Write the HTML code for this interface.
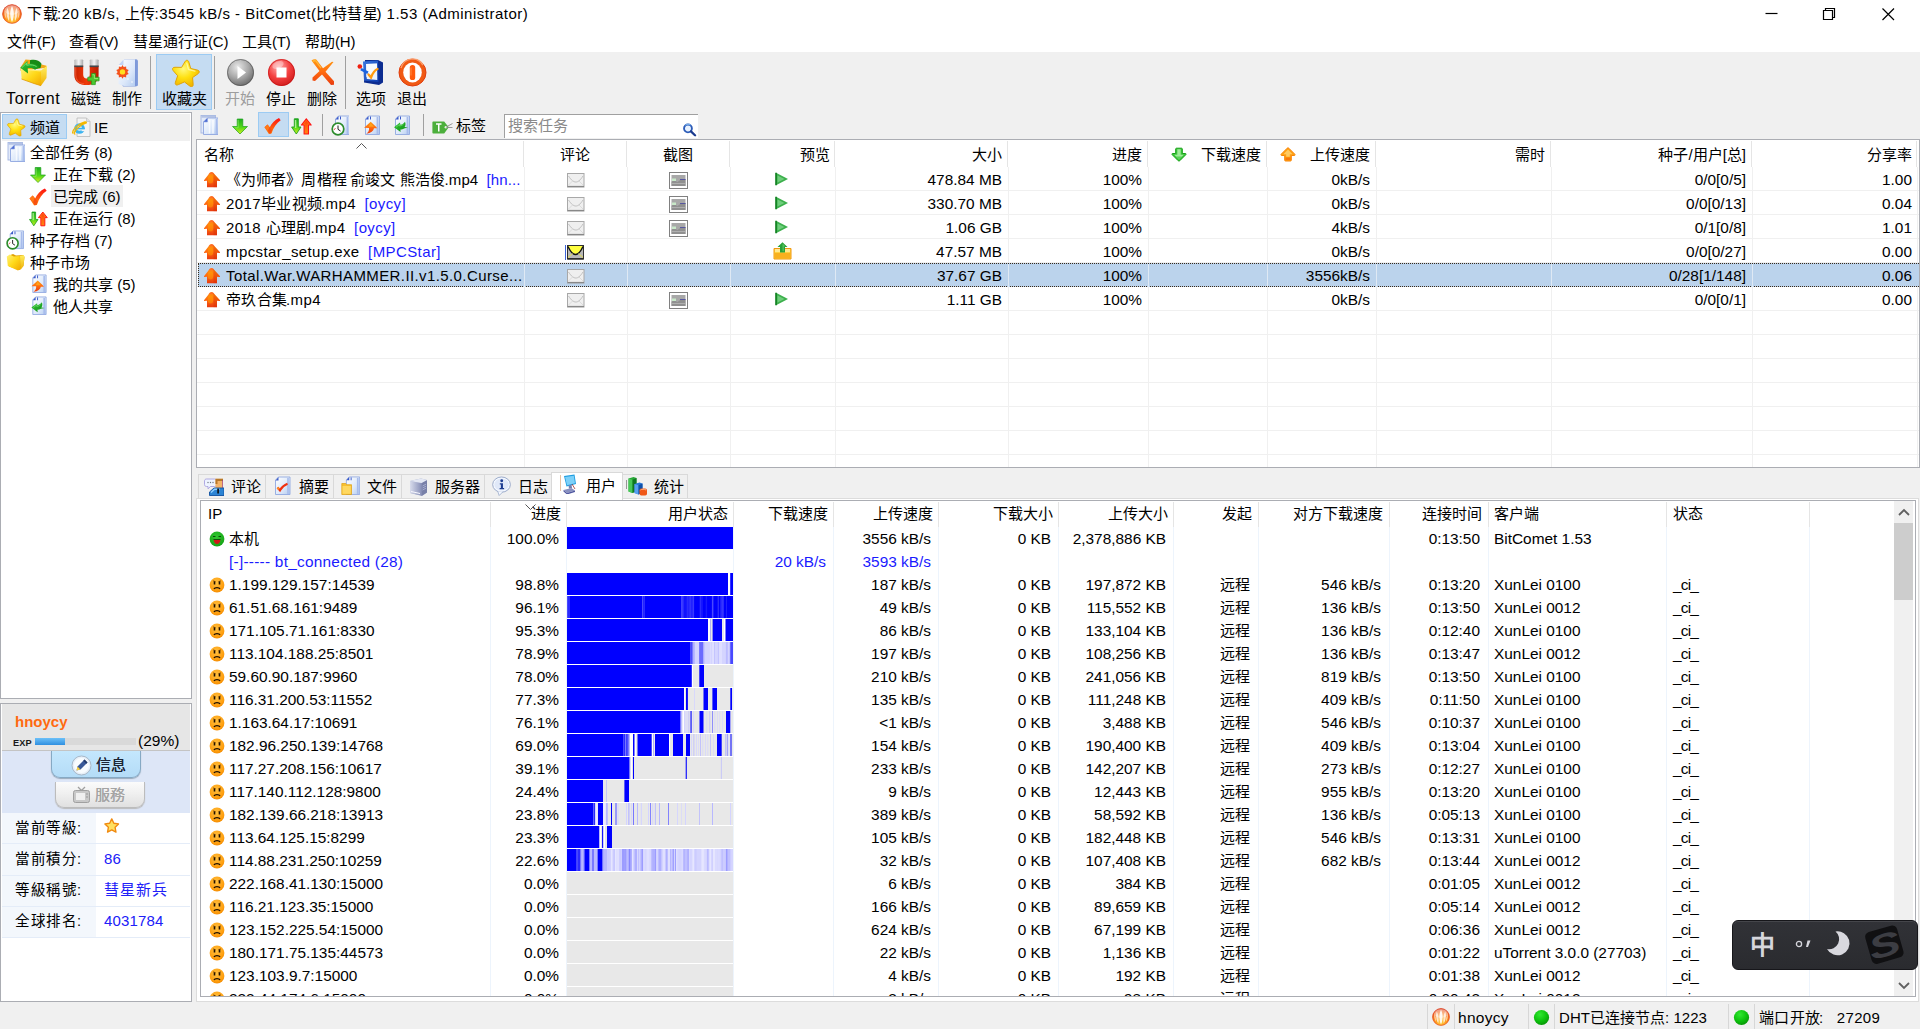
<!DOCTYPE html>
<html lang="zh-CN"><head><meta charset="utf-8"><title>BitComet</title>
<style>
*{box-sizing:border-box;margin:0;padding:0}
html,body{width:1920px;height:1029px;overflow:hidden}
body{position:relative;background:#f0f0f0;font-family:"Liberation Sans",sans-serif;font-size:15px;color:#000;line-height:18px}
#top{position:absolute;left:0;top:0;width:1920px;height:52px;background:#fff}
.i{position:absolute;overflow:visible}
.t{position:absolute;white-space:nowrap;line-height:18px;height:18px;margin-top:1px}
.c{text-align:center}
.r{text-align:right}
.n{font-size:15.4px}
.m{font-size:15px;letter-spacing:.4px}
.m b{font-weight:normal;color:#1a1aff;margin-left:4px}
.bl{color:#1a1aff}
.dis{color:#9d9d9d}
.tbhl{position:absolute;background:#c5dcf2;border:1px solid #9ccbf3}
.vsep{position:absolute;width:1px;background:#a0a0a0}
#lp{position:absolute;left:0;top:112px;width:192px;height:587px;background:#fff;border:1px solid #abadb3}
#lp .tabstrip{position:absolute;left:1px;top:1px;width:188px;height:27px;background:#f0f0f0}
#search{position:absolute;left:504px;top:114px;width:194px;height:24px;background:#fff;border-top:1px solid #a0a0a0;border-left:1px solid #a0a0a0}
#search>span{position:absolute;left:3px;top:2px;color:#8a8a8a;line-height:18px}
#tl{position:absolute;left:196px;top:139px;width:1724px;height:329px;background:#fff;border:1px solid #abadb3;overflow:hidden}
#tl .hl{position:absolute;top:1px;width:1px;height:26px;background:#e5e5e5}
#tl .cl{position:absolute;top:27px;width:1px;height:300px;background:#f0f0f0}
#tl .cl2{position:absolute;width:1px;height:23px;background:#dfe9f4}
#tl .rl{position:absolute;left:0;width:1722px;height:1px;background:#f0f0f0}
#tl .sel{position:absolute;left:1px;width:1721px;height:24px;background:#bbd3ec;border:1px dotted #3a2a18;border-right:none}
#bp{position:absolute;left:196px;top:498px;width:1723px;height:504px;border:1px solid #dcdcdc;background:#fff}
.tab{position:absolute;border-left:1px solid #d9d9d9;border-top:1px solid #d9d9d9;background:#f0f0f0}
.tsel{background:#fff;border-right:1px solid #d9d9d9}
#pl{position:absolute;left:200px;top:500px;width:1716px;height:497px;background:#fff;border:1px solid #abadb3;overflow:hidden}
#pl .pcl{position:absolute;top:26px;width:1px;height:470px;background:#edf4fc}
#pl .phl{position:absolute;top:1px;width:1px;height:25px;background:#e5e5e5}
#pl .bar{position:absolute;left:366px;width:166px;height:22px}
#sb{position:absolute;left:1693px;top:0;width:19px;height:495px;background:#f0f0f0}
#sb .thumb{position:absolute;left:0;top:22px;width:19px;height:77px;background:#cdcdcd}
.ssep{position:absolute;top:1004px;width:1px;height:25px;background:#d7d7d7}
#up{position:absolute;left:0;top:703px;width:192px;height:299px;background:#fff;border:1px solid #abadb3;overflow:hidden}
#up .hd{position:absolute;left:1px;top:0;width:188px;height:47px;background:#e6e6e6;border-bottom:1px solid #c4c4c4}
#up .xp{position:absolute;left:34px;top:34px;width:101px;height:7px;background:#d9d9d9}
#up .xp div{width:30px;height:7px;background:linear-gradient(#6cc0f8,#2f8fe0)}
#up .mid{position:absolute;left:1px;top:47px;width:188px;height:62px;background:#dde6f7}
#up .btn{position:absolute;border-radius:0 0 9px 9px}
#up .b1{left:50px;top:47px;width:90px;height:27px;background:linear-gradient(#c4e7fd,#b4dcf7);border:1px solid #86a9c4;border-top:none;box-shadow:0 1px 1px #9ab}
#up .b2{left:54px;top:78px;width:90px;height:26px;background:linear-gradient(#fbfbfb,#f0f0f0 45%,#e0e0e0);border:1px solid #bcbcbc;border-top:none;box-shadow:0 1px 1px #bbb}
#up .rows{position:absolute;left:1px;top:109px;width:188px}
#up .rw{position:relative;height:31.3px;border-bottom:1px solid #e4ecf8;background:linear-gradient(90deg,#f3f7fc 94px,#fff 94px)}
#up .rw>span{position:absolute;left:13px;top:5.5px;font-size:14.5px;letter-spacing:1.5px;white-space:nowrap}
#up .rw>i{position:absolute;left:102px;top:5.5px;font-style:normal;color:#2020f8;font-size:15px;letter-spacing:.15px;white-space:nowrap}
#ime{position:absolute;left:1732px;top:920px;width:186px;height:50px;border-radius:6px;background:linear-gradient(#313237,#2a2b2f);border:1.500px solid #16161a;box-shadow:inset 0 1px 0 #44454a}
#up .t{margin-top:0}
.z{display:inline-block;white-space:nowrap;text-align:justify;text-align-last:justify;text-justify:inter-character}
#up .rw .z{width:auto !important}
#up .rw>i .z{width:auto !important;letter-spacing:.9px}

</style></head>
<body>
<svg width="0" height="0" style="position:absolute"><defs>

<radialGradient id="gBc" cx=".5" cy=".8" r=".75"><stop offset="0" stop-color="#ffd040"/><stop offset=".45" stop-color="#ff9418"/><stop offset=".85" stop-color="#f0601a"/><stop offset="1" stop-color="#d8402a"/></radialGradient>
<linearGradient id="gFold" x1="0" y1="0" x2="1" y2="1"><stop offset="0" stop-color="#fff27a"/><stop offset=".5" stop-color="#ffd91a"/><stop offset="1" stop-color="#f2a800"/></linearGradient>
<linearGradient id="gFold2" x1="0" y1="0" x2="0" y2="1"><stop offset="0" stop-color="#ffee60"/><stop offset="1" stop-color="#f0b000"/></linearGradient>
<linearGradient id="gGrn" x1="0" y1="0" x2="0" y2="1"><stop offset="0" stop-color="#1fae1f"/><stop offset=".55" stop-color="#52d818"/><stop offset="1" stop-color="#d8ee20"/></linearGradient>
<linearGradient id="gGrn2" x1="0" y1="0" x2="1" y2="1"><stop offset="0" stop-color="#38c838"/><stop offset="1" stop-color="#0c8a14"/></linearGradient>
<linearGradient id="gRedUp" x1="0" y1="0" x2="0" y2="1"><stop offset="0" stop-color="#ff1010"/><stop offset="1" stop-color="#ff8a10"/></linearGradient>
<linearGradient id="gOr" x1="0" y1="0" x2="0" y2="1"><stop offset="0" stop-color="#ff9a10"/><stop offset=".5" stop-color="#ff6a10"/><stop offset="1" stop-color="#e83c10"/></linearGradient>
<linearGradient id="gMag" x1="0" y1="0" x2="1" y2="0"><stop offset="0" stop-color="#c82000"/><stop offset=".5" stop-color="#f03a08"/><stop offset="1" stop-color="#b81c00"/></linearGradient>
<linearGradient id="gTip" x1="0" y1="0" x2="1" y2="0"><stop offset="0" stop-color="#b8b8b8"/><stop offset=".5" stop-color="#f4f4f4"/><stop offset="1" stop-color="#a8a8a8"/></linearGradient>
<linearGradient id="gDoc" x1="0" y1="0" x2="1" y2="1"><stop offset="0" stop-color="#ffffff"/><stop offset=".6" stop-color="#dce8fa"/><stop offset="1" stop-color="#b4ccf0"/></linearGradient>
<radialGradient id="gStar" cx=".4" cy=".35" r=".7"><stop offset="0" stop-color="#fffa80"/><stop offset=".5" stop-color="#ffe010"/><stop offset="1" stop-color="#f0b400"/></radialGradient>
<radialGradient id="gGrey" cx=".4" cy=".3" r=".8"><stop offset="0" stop-color="#e8e8e8"/><stop offset=".5" stop-color="#a8a8a8"/><stop offset="1" stop-color="#5c5c5c"/></radialGradient>
<radialGradient id="gRed" cx=".4" cy=".3" r=".8"><stop offset="0" stop-color="#ffb0b0"/><stop offset=".5" stop-color="#f44040"/><stop offset="1" stop-color="#c81414"/></radialGradient>
<radialGradient id="gBall" cx=".4" cy=".3" r=".75"><stop offset="0" stop-color="#30e830"/><stop offset=".6" stop-color="#0cc00c"/><stop offset="1" stop-color="#089008"/></radialGradient>
<radialGradient id="gFaceO" cx=".45" cy=".35" r=".7"><stop offset="0" stop-color="#ffc040"/><stop offset=".7" stop-color="#ffa010"/><stop offset="1" stop-color="#f08800"/></radialGradient>
<radialGradient id="gFaceG" cx=".45" cy=".35" r=".7"><stop offset="0" stop-color="#30c830"/><stop offset="1" stop-color="#12a012"/></radialGradient>
<linearGradient id="gBlueDoc" x1="0" y1="0" x2="1" y2="1"><stop offset="0" stop-color="#3c78e0"/><stop offset="1" stop-color="#0c3cb0"/></linearGradient>
<linearGradient id="gSrv" x1="0" y1="0" x2="1" y2="0"><stop offset="0" stop-color="#d8dcec"/><stop offset="1" stop-color="#8890b8"/></linearGradient>
<symbol id="s-bc" viewBox="0 0 20 20"><circle cx="10" cy="10" r="9.600" fill="url(#gBc)"/>
<ellipse cx="10" cy="6" rx="7.500" ry="5" fill="#fff" opacity=".45"/>
<path d="M10 18C7.300 13 7.800 6.500 10 2C12.200 6.500 12.700 13 10 18z" fill="#fff" opacity=".9"/>
<path d="M7 17C4 12.500 4 7.500 5.300 3.800C7.300 7.500 8 12.500 7 17z" fill="#fff" opacity=".75"/>
<path d="M13 17C16 12.500 16 7.500 14.700 3.800C12.700 7.500 12 12.500 13 17z" fill="#fff" opacity=".75"/>
<path d="M4.300 15C2.200 12 1.900 9 2.700 6C4.200 9 4.800 12 4.300 15z" fill="#fff" opacity=".55"/>
<path d="M15.700 15C17.800 12 18.100 9 17.300 6C15.800 9 15.200 12 15.700 15z" fill="#fff" opacity=".55"/>
<circle cx="10" cy="10" r="9.300" fill="none" stroke="#e4502c" stroke-width=".9" opacity=".85"/></symbol>
<symbol id="s-torrent" viewBox="0 0 29 29"><path d="M1.500 9.500l5-8 6 .5 1.500 2.200 13.500 3.500v2l-26 3z" fill="#f0a818"/>
<path d="M22 12.500l5.900-4.700-.4 12.200-5.500 7.700z" fill="url(#gFold2)"/>
<path d="M1.700 10.500l20.300 2v15.200l-7-2.200-12.300-4.500z" fill="url(#gFold)"/>
<path d="M2.500 21l12.500 4.500 7 2.200" stroke="#e09800" stroke-width=".8" fill="none"/>
<path d="M2.200 11l19.500 2" stroke="#fffab0" stroke-width=".8" opacity=".8"/>
<path d="M11 2.300c4.500-1.300 9.500 0 11.500 3.500l-1 4.200-4.500 .8c-1-2.500-3-3.800-6-3.500z" fill="#168a16"/>
<path d="M1.300 9.800l7.200-7v3.500c5-1.200 9.500 0 12 3l-4.500 2.500c-1.800-1.500-4.500-2-7.300-1.500l.3 5.200z" fill="url(#gGrn2)"/>
<path d="M3 9.500l4.700-4.500v2.200c4-.8 7.500-.3 10 1.500" stroke="#90f090" stroke-width="1" fill="none" opacity=".7"/></symbol>
<symbol id="s-magnet" viewBox="0 0 30 30"><path d="M2.500 8h9.500v10c0 2.500 1.500 4 3.500 4s3.500-1.500 3.500-4v-10h9.500v10.500c0 7-5.500 10.500-13 10.500s-13-3.500-13-10.500z" fill="url(#gMag)"/>
<path d="M4 9v9.500c0 5 3.500 8.500 9 9.200" stroke="#ff6a40" stroke-width="1.200" fill="none" opacity=".6"/>
<rect x="2.500" y="1.500" width="9.500" height="7" rx="1" fill="url(#gTip)"/><rect x="19" y="1.500" width="9.500" height="7" rx="1" fill="url(#gTip)"/>
<rect x="2.500" y="8" width="9.500" height="1.800" fill="#44484c"/><rect x="19" y="8" width="9.500" height="1.800" fill="#44484c"/>
<path d="M21 16.500h4v4h4v4h-4v4h-4v-4h-4v-4h4z" fill="#48c830" stroke="#2a9a1c" stroke-width=".8"/>
<path d="M22 18h2v4h4" stroke="#a8f088" stroke-width="1" fill="none" opacity=".8"/></symbol>
<symbol id="s-make" viewBox="0 0 26 30"><path d="M10 1.500h13l1 1v25l-2 1h-13l-1-2z" fill="#86a0dc"/>
<path d="M9.500 1.500l-5 5.500v19l5.500 2h11.500v-26.500z" fill="url(#gDoc)"/>
<path d="M9.500 1.500v5.500h-5z" fill="#c4d4f4"/>
<path d="M21.800 1.500v26.500" stroke="#7894d8" stroke-width="1.400"/>
<path d="M8.500 7l1.200 2.100 2.400-.7 .2 2.500 2.400 1-1.400 2 1.400 2-2.400 1-.2 2.500-2.400-.7-1.200 2.100-1.200-2.100-2.400 .7-.2-2.500-2.400-1 1.400-2-1.400-2 2.400-1 .2-2.500 2.400 .7z" fill="#f4521c"/>
<circle cx="8.500" cy="13.900" r="2.700" fill="#ffe020"/>
<circle cx="14" cy="21" r=".7" fill="#fff"/><circle cx="18" cy="24" r=".8" fill="#fff"/></symbol>
<symbol id="s-star" viewBox="0 0 29 28"><path d="M14.500 1.200c.9 0 1.500.6 2 1.700l2.600 6 6.600.7c1.200.1 2 .6 2.200 1.400.2.800-.2 1.500-1 2.300l-4.900 4.400 1.400 6.500c.2 1.100.1 2-.6 2.500s-1.600.3-2.600-.3l-5.700-3.400-5.700 3.400c-1 .6-1.900.8-2.600.3s-.8-1.400-.6-2.500l1.400-6.500-4.900-4.400c-.8-.8-1.200-1.500-1-2.300.2-.8 1-1.300 2.200-1.400l6.600-.7 2.600-6c.5-1.100 1.100-1.700 2-1.700z" fill="url(#gStar)" stroke="#e0a000" stroke-width=".9" transform="rotate(7 14.500 14.500)"/>
<path d="M14.500 4l2.500 6.200 6.500.8" transform="rotate(7 14.500 14.500)" stroke="#fffcc0" stroke-width="1.400" fill="none" opacity=".7" stroke-linecap="round"/></symbol>
<symbol id="s-start" viewBox="0 0 29 29"><circle cx="14.500" cy="14.500" r="13.500" fill="url(#gGrey)"/><circle cx="14.500" cy="14.500" r="13" fill="none" stroke="#505050" stroke-width="1" opacity=".6"/>
<path d="M11.500 8l8.500 6.500-8.500 6.500z" fill="#fff"/></symbol>
<symbol id="s-stop" viewBox="0 0 29 29"><circle cx="14.500" cy="14.500" r="13.500" fill="url(#gRed)"/><circle cx="14.500" cy="14.500" r="13" fill="none" stroke="#c01010" stroke-width="1" opacity=".6"/>
<ellipse cx="11" cy="7" rx="6" ry="3.500" fill="#fff" opacity=".35" transform="rotate(-25 11 7)"/>
<rect x="9.500" y="9.500" width="10" height="10" fill="#fff"/></symbol>
<symbol id="s-del" viewBox="0 0 26 29"><path d="M1.500 2.500c1.500-1.200 3.500-1.500 5-.8l6.500 8.500 9-6.500 1.500 .3-8 9.700 8.500 9.500v3.500l-3 .3-9-10.500-7 6.500-2.500-.5v-3l7-6.500z" fill="url(#gOr)"/>
<path d="M2.500 3.500c1-.8 2-1 3.500-.5l5 7" stroke="#ffc040" stroke-width="1.300" fill="none" opacity=".8"/></symbol>
<symbol id="s-opt" viewBox="0 0 27 27"><path d="M8 1l13 0 5 2.500v20l-4 2.500-15-2.500z" fill="#0c2c90"/>
<path d="M6 2.500l15-1 .5 21.500-14.500-1.500z" fill="url(#gBlueDoc)"/>
<path d="M9 5l11-.5 .3 16.500-10.500-1z" fill="#eaf2fc"/>
<path d="M9 5l11-.5v8c-4 1-8 3-11 6z" fill="#fff" opacity=".6"/>
<path d="M11.500 15.500l2.500 3c1.500-4 3-7 6.500-8.500" stroke="#ff9a10" stroke-width="2.300" fill="none" stroke-linecap="round"/>
<circle cx="2.800" cy="7.500" r="2.300" fill="#f02010"/>
<path d="M4.500 9l7 3.500-1.200 2.500-7-3.800z" fill="#1c64e0"/></symbol>
<symbol id="s-exit" viewBox="0 0 29 29"><circle cx="14.500" cy="14.500" r="13.500" fill="#f05a14"/><circle cx="14.500" cy="14.500" r="13.500" fill="none" stroke="#e03c0c" stroke-width="1"/>
<path d="M3 10a12 12 0 0 1 22-3" stroke="#ffb080" stroke-width="1.500" fill="none" opacity=".8"/>
<ellipse cx="14.500" cy="14.500" rx="9.300" ry="10" fill="#fff"/>
<rect x="11.800" y="7" width="5.400" height="15" rx="2.600" fill="#ff5a0c"/>
<path d="M13 9.500v8" stroke="#ff9a50" stroke-width="1" opacity=".8"/></symbol>
<symbol id="s-docs" viewBox="0 0 18 20"><rect x="1" y=".5" width="14.500" height="17.500" fill="#e2eaf9" stroke="#a4b6e2" stroke-width=".9"/><rect x="1.400" y=".9" width="13.700" height="1.800" fill="#b4c2e4"/>
<path d="M7.500 3h10.500v16.500h-14.500v-12.500z" fill="url(#gDoc)" stroke="#8ea6e0" stroke-width=".9"/>
<path d="M7.500 3v4h-4z" fill="#4c6cd4"/><path d="M7.500 3v4h-4" fill="none" stroke="#8ea6e0" stroke-width=".6"/>
<path d="M9.500 5v13.500M13 5v13.500" stroke="#fff" stroke-width="1.600" opacity=".75"/><path d="M16.300 4v15" stroke="#a8bcec" stroke-width="1.400"/></symbol>
<symbol id="s-down" viewBox="0 0 18 17"><path d="M6.200 1h5.600v7.500h4.700l-7.500 7.500-7.500-7.500h4.700z" fill="url(#gGrn)" stroke="#1ea01e" stroke-width=".7" stroke-linejoin="round"/>
<path d="M7.200 1.800v8h-3.500" stroke="#a0f470" stroke-width="1" fill="none" opacity=".55"/></symbol>
<symbol id="s-check" viewBox="0 0 17 16"><path d="M.5 9.300l3-2.800 2.300 2.800c1.800-3.800 4.800-7.300 9.200-9.300l1.700 2.200c-4.300 2.800-7.200 7.200-9.200 13.300l-2.800 .3z" fill="url(#gRedUp)"/>
<path d="M.5 9.300l3-2.800 2 2.500-1.500 3.800z" fill="#ff7a18"/><path d="M4 12.800l1.500-3.800 2.500 3-1 3.500-2 .3z" fill="#f85010"/></symbol>
<symbol id="s-updown" viewBox="0 0 21 17"><path d="M3.300 .8h4v8.200h2.700l-4.700 7-4.700-7h2.700z" fill="url(#gGrn)" stroke="#1ea01e" stroke-width=".9" stroke-linejoin="round"/><path d="M4.600 2v8" stroke="#d8ffc0" stroke-width="1.400" opacity=".7"/>
<path d="M15.300 .8l4.900 6.200h-2.700v9h-4.400v-9h-2.700z" fill="#ff7c10" stroke="#ff1414" stroke-width="1.100" stroke-linejoin="round"/><path d="M15.300 2.500l2.500 3.500h-1.300v9h-2.400v-9h-1.300z" fill="url(#gRedUp)" opacity=".55"/></symbol>
<symbol id="s-clockdoc" viewBox="0 0 18 21"><g transform="translate(2 0)"><path d="M5.500 1h11v18.500h-14v-15.500z" fill="url(#gDoc)" stroke="#90a8e0" stroke-width=".9"/><path d="M5.500 1v3.500h-3z" fill="#3858c8"/><path d="M14.500 2v17" stroke="#a8bcec" stroke-width="1.800"/><path d="M7.500 1.500v3" stroke="#3858c8" stroke-width="1"/></g><circle cx="7" cy="14" r="5.800" fill="#fff" stroke="#2c8c2c" stroke-width="1.700"/><path d="M7 10.500v3.800l2.500 1.700" stroke="#202020" stroke-width="1" fill="none"/><path d="M4.500 13l-1.500 2" stroke="#d02020" stroke-width=".7"/></symbol>
<symbol id="s-updoc" viewBox="0 0 17 20"><path d="M5.500 1h11v18.500h-14v-15.500z" fill="url(#gDoc)" stroke="#90a8e0" stroke-width=".9"/><path d="M5.500 1v3.500h-3z" fill="#3858c8"/><path d="M14.500 2v17" stroke="#a8bcec" stroke-width="1.800"/><path d="M7.500 1.500v3" stroke="#3858c8" stroke-width="1"/><path d="M7.700 6.800l5.300 5 1.200 1.500h-3.200c-.5 2.700-3 4.700-7.700 5.500c2.200-1.800 3-3.300 2.700-5.800l-4.900-.2z" fill="url(#gOr)"/><path d="M7.700 8.300l3.300 3.500h-5.500z" fill="#ffb020" opacity=".7"/></symbol>
<symbol id="s-downdoc" viewBox="0 0 17 20"><path d="M5.500 1h11v18.500h-14v-15.500z" fill="url(#gDoc)" stroke="#90a8e0" stroke-width=".9"/><path d="M5.500 1v3.500h-3z" fill="#3858c8"/><path d="M14.500 2v17" stroke="#a8bcec" stroke-width="1.800"/><path d="M7.500 1.500v3" stroke="#3858c8" stroke-width="1"/><path d="M1 12.200l6-4.700 .3 2.300c2.200-.5 3.700-1.500 4.700-3.100c1 2.300 .5 4.300-.5 5.300l3.400 .5-3.900 1c-1 .8-2.200 1.100-3.600 1.100l.2 2.400z" fill="url(#gGrn2)"/><path d="M3 12.200l3.500-2.700 .2 1.500c1.500-.2 2.800-.8 3.800-1.800" stroke="#70e070" stroke-width=".9" fill="none" opacity=".8"/></symbol>
<symbol id="s-tag" viewBox="0 0 21 13"><path d="M1.200 .5h11l4.500 5.800-4.500 6.200h-11c-.5 0-.8-.3-.8-.8v-10.400c0-.5.300-.8.800-.8z" fill="#4caf3c"/>
<path d="M4 3h5.500M6.750 3v7.500" stroke="#fff" stroke-width="1.500" fill="none"/>
<circle cx="13.800" cy="6.300" r="1.200" fill="#e8f4e0"/><path d="M14.500 5.800l6-3.300M14.500 6.500l6 0" stroke="#8c8c8c" stroke-width=".9" fill="none"/></symbol>
<symbol id="s-search" viewBox="0 0 17 17"><circle cx="7" cy="7.500" r="4.600" fill="#e8f2ff" stroke="#2c5cb8" stroke-width="2.200"/><path d="M10.500 11l5 4.800" stroke="#1c3c90" stroke-width="2.600" stroke-linecap="round"/><path d="M4 4a5 5 0 0 1 6-.5" stroke="#7cb4f0" stroke-width="1.200" fill="none"/></symbol>
<symbol id="s-ie" viewBox="0 0 19 20"><path d="M5 1h9.500l3.500 3.500v15h-13z" fill="#f4f4f4" stroke="#b8b8b8" stroke-width=".8"/><path d="M14.500 1v3.500h3.500" fill="#e0e0e0" stroke="#b8b8b8" stroke-width=".6"/>
<circle cx="7.500" cy="11.500" r="5.300" fill="#3cb4f0"/><circle cx="7.500" cy="11.300" r="2.500" fill="#f4f4f4"/><rect x="4.500" y="10.700" width="8.200" height="1.700" fill="#3cb4f0"/><path d="M9.500 12.400h3.500v1.800h-3.500z" fill="#f4f4f4"/>
<path d="M.8 16.500c-1-3 4-9.500 12-11.500 1.500-.3 2 .5 1 1.200-5 1.500-10.500 6-11.500 9.500-.3 1 .2 1.500 1 1.300" stroke="#f4b800" stroke-width="1.300" fill="none"/></symbol>
<symbol id="s-folder" viewBox="0 0 19 18"><path d="M3 2.500l4-1.500 3 1.500 7.500-.5 1 2-1 9-4 4-10.500-3.500z" fill="#e0a000"/>
<path d="M.8 3.500l3-2 4 2 6-.5.7 13-2.500 1.500-10.200-4.500z" fill="url(#gFold)"/>
<path d="M14 3l3.800-1 .7 2.500-1.200 8.500-2.800 4z" fill="url(#gFold2)"/></symbol>
<symbol id="s-dng" viewBox="0 0 16 15"><path d="M5.500 1.200h5c.5 0 .8.300 .8.800v4.500h3c.8 0 1 .6 .5 1.200l-6 6c-.5.500-1.100.500-1.600 0l-6-6c-.5-.6-.3-1.200.500-1.200h3v-4.500c0-.5.300-.8.800-.8z" fill="#3cc83c" stroke="#18a018" stroke-width="1"/><path d="M6.300 2.300h3.400v5.500h3l-4.700 4.700-4.700-4.700h3z" fill="#b8f4b0" opacity=".8"/><path d="M5 9.500l3 3 3-3z" fill="#3cc83c" opacity=".7"/></symbol>
<symbol id="s-upo" viewBox="0 0 16 15"><path d="M7.200 1.200c.5-.5 1.100-.5 1.600 0l6 6c.5.600 .3 1.300-.5 1.300h-3v4.700c0 .5-.3.800-.8.800h-5c-.5 0-.8-.3-.8-.8v-4.700h-3c-.8 0-1-.7-.5-1.300z" fill="#ffa010" stroke="#f88408" stroke-width="1"/><path d="M8 2.500l4.500 4.800h-2.700v2.500h-3.600v-2.500h-2.700z" fill="#ffd070" opacity=".85"/><path d="M5.500 10.500h5v2.500h-5z" fill="#f86c08" opacity=".8"/></symbol>
<symbol id="s-upo2" viewBox="0 0 18 16"><path d="M6.800 .8l1.700-.8 1.700 .8 6.800 7.400v.9l-3-.3v6.400h-10v-6.400l-3 .3v-.9z" fill="url(#gOr)"/><path d="M8.500 0l1.700 .8 6.800 7.400v.9l-3-.3v6.400h-3.500v-12z" fill="#c82000" opacity=".28"/><path d="M6.800 .8l1.700-.8 1.700 .8 1.300 1.500h-6z" fill="#ff6030" opacity=".7"/><ellipse cx="7.500" cy="7.500" rx="2.800" ry="4" fill="#ffa800" opacity=".45"/></symbol>
<symbol id="s-mail" viewBox="0 0 20 15"><rect x="1.500" y=".5" width="16.500" height="13.500" fill="#efefef" stroke="#a8a8a8"/><path d="M1.500 13.500h16.500" stroke="#888" stroke-width="1.200"/><path d="M2.500 3c3 4.500 5 6 7.300 6s4.300-1.500 7.200-6" stroke="#c0c0c0" stroke-width="1" fill="none"/><path d="M2.500 12l4.500-4.500M17 12l-4.500-4.500" stroke="#d8d8d8" stroke-width=".9"/></symbol>
<symbol id="s-mail2" viewBox="0 0 20 15"><path d="M1.500 0v15" stroke="#3c64d8" stroke-width="1"/><rect x="3.500" y=".5" width="16" height="13.500" fill="#b8b8b8" stroke="#303030"/><path d="M4 1h15c-2.500 5.500-5 8-7.500 8s-5-2.500-7.500-8z" fill="#ffff40"/><path d="M4 1.500c2.500 5.500 5 8 7.500 8s5-2.500 7.500-8" stroke="#101010" stroke-width="1.400" fill="none"/><path d="M4 12.500l4.500-4M19 12.500l-4.500-4" stroke="#e8e040" stroke-width=".9"/><path d="M3.500 13.800h16" stroke="#202020" stroke-width="1.300"/></symbol>
<symbol id="s-img" viewBox="0 0 19 17"><rect x=".5" y=".5" width="18" height="16" fill="#fff" stroke="#808080"/><rect x="2.500" y="3" width="14" height="11" fill="#a8a8a8"/><path d="M2.500 9.500l3-1 3 1.500 3.500-2.500 4.500-.5v7h-14z" fill="#909090"/><rect x="3" y="6.500" width="4" height="2.500" fill="#c8e8c8"/><path d="M11 7.500h5.500" stroke="#5050a0" stroke-width=".9"/><path d="M2.500 11.500h14" stroke="#b8b8b8" stroke-width=".8"/></symbol>
<symbol id="s-play" viewBox="0 0 14 14"><path d="M1 .8l12 6.200-12 6.200z" fill="#3cb04c"/><path d="M1 .8v12.400" stroke="#0c7c1c" stroke-width="1.600"/><path d="M2.500 3.500l7 3.500-7 3.500z" fill="#7cd488" opacity=".8"/></symbol>
<symbol id="s-upload" viewBox="0 0 19 18"><path d="M1 6.500h17v10.500h-17z" fill="#ffd040" stroke="#f09810" stroke-width="1"/><path d="M1.500 11h16v5.500h-16z" fill="#f8b020"/><path d="M2 7h15v3h-15z" fill="#ffe890"/><path d="M9.500 .3l5 4.700h-2.500v5.500h-5v-5.500h-2.500z" fill="#28a038"/><path d="M9.500 1.500l2.800 2.800h-1.500v5h-1.300z" fill="#68d070" opacity=".7"/></symbol>
<symbol id="s-comment" viewBox="0 0 20 18"><path d="M2.500 1h8c1.200 0 2 .8 2 2v3.500c0 1.200-.8 2-2 2h-4l-2.500 2.300v-2.300h-1.500c-1.200 0-2-.8-2-2v-3.500c0-1.200.8-2 2-2z" fill="#eef4ff" stroke="#a8a0e0" stroke-width=".9"/><circle cx="4" cy="4.500" r=".7" fill="#707880"/><circle cx="6.500" cy="4.500" r=".7" fill="#707880"/><circle cx="9" cy="4.500" r=".7" fill="#707880"/>
<path d="M11.500 .8h7.500v9.700h-7.500z" fill="#f4b468"/><path d="M11.500 .8h7.500v2.200h-5.500v3h-2z" fill="#b87828"/><path d="M18.500 2v8.500" stroke="#9030a0" stroke-width=".8" opacity=".7"/>
<path d="M5.500 17.500v-3.500l4.500-4h10v7.500z" fill="#2c84d4" stroke="#1050a0" stroke-width=".9"/><path d="M7 14.500l3.500-3.200h5" stroke="#90d0ff" stroke-width="1.400" fill="none"/><path d="M13.200 10.500h1.800v5h-1.800z" fill="#101820"/></symbol>
<symbol id="s-summary" viewBox="0 0 17 19"><path d="M4.500 1h11.500v17.500h-14.500v-14.500z" fill="url(#gDoc)" stroke="#90a8e0" stroke-width=".9"/><path d="M4.500 1v3.500h-3z" fill="#4060c8"/><path d="M14 2v16" stroke="#a8bcec" stroke-width="1.600"/><path d="M3.500 11.500l2.500 2.800c1.500-2.500 3.500-5 7.500-6.500" stroke="#f03010" stroke-width="2.200" fill="none"/><path d="M3.500 11.500l1.500 1.800" stroke="#ff8a20" stroke-width="2"/></symbol>
<symbol id="s-files" viewBox="0 0 19 19"><g transform="translate(3 0) scale(.95)"><path d="M5.500 1h11v18.500h-14v-15.500z" fill="url(#gDoc)" stroke="#90a8e0" stroke-width=".9"/><path d="M5.500 1v3.500h-3z" fill="#3858c8"/><path d="M14.500 2v17" stroke="#a8bcec" stroke-width="1.800"/><path d="M7.500 1.500v3" stroke="#3858c8" stroke-width="1"/></g><path d="M.8 7.500h4l1 1.200h4.700v9.800h-9.700z" fill="#f8c030" stroke="#e0a010" stroke-width=".7"/><path d="M1.500 10h8.300v7.800h-8.300z" fill="#ffd860"/></symbol>
<symbol id="s-server" viewBox="0 0 19 18"><path d="M1 3l11-2.500 6 1.500v12.500l-5 3.500-12-3z" fill="#a0a8c8"/><path d="M1 3l11.500 2v12.500l-11.500-2.500z" fill="url(#gSrv)"/><path d="M12.500 5l5.500-3v12.500l-5.500 3.500z" fill="#7880a8"/><path d="M1 3l11-2.500 6 1.500-5.500 3z" fill="#e4e8f4"/><path d="M13.500 8l3.500-1.800M13.500 10l3.500-1.800M13.500 12l3.500-1.800" stroke="#b0b8d8" stroke-width=".8"/><path d="M2 13.500l9 2" stroke="#f8f8ff" stroke-width="1"/></symbol>
<symbol id="s-log" viewBox="0 0 21 21"><ellipse cx="10" cy="8.500" rx="9.300" ry="8" fill="#f4f8ff" stroke="#98a8c8" stroke-width="1"/><path d="M6 15.500l1.500 4.500 4-4" fill="#f4f8ff" stroke="#98a8c8" stroke-width=".8"/><ellipse cx="10" cy="8.500" rx="7.500" ry="6.300" fill="#e0e8f8"/><circle cx="10.200" cy="4.500" r="1.500" fill="#1c3c90"/><path d="M8.200 7h3.300v5h1.200v1.300h-4.700v-1.300h1.300v-3.700h-1.100z" fill="#1c3c90"/></symbol>
<symbol id="s-users" viewBox="0 0 17 20"><path d="M.5 1v16" stroke="#d8a070" stroke-width=".8" opacity=".8"/><path d="M4 2l10.500-1.500 1.500 9.500-9.500 2.500z" fill="#1c9ce0"/><path d="M5 3l8.800-1.300 1.200 7.500-8 2z" fill="#7cd0f8"/><path d="M8.500 11.500l3-.8.5 3.300-3 .7z" fill="#7080b0"/><path d="M3.500 16l8-2 3.500 2.500-8 2.500z" fill="#8890c0"/><path d="M3.500 16v1.500l3.500 3 8-2.500v-1.500l-8 2.500z" fill="#5058a0"/><path d="M12 10l3 5" stroke="#a03030" stroke-width=".8"/></symbol>
<symbol id="s-stats" viewBox="0 0 22 20"><path d="M.5 4v9" stroke="#808080" stroke-width=".8"/><path d="M2.500 2.500l5-1.500 3 1v13l-4 2-4-1.500z" fill="#28a838"/><path d="M2.500 2.500l4 1.200v13.300l-4-1.500z" fill="#48c858"/><path d="M6.500 3.700l4-1.700v13l-4 2z" fill="#107820"/>
<path d="M8.500 8l5-1.500 3 1v9l-4 2-4-1.500z" fill="#2878d8"/><path d="M8.500 8l4 1.200v9.300l-4-1.500z" fill="#58a0f0"/><path d="M12.500 9.200l4-1.700v9l-4 2z" fill="#1050a8"/>
<rect x="13.500" y="12.500" width="7.500" height="7" rx="1.800" fill="#f05818"/><path d="M14.500 14c1-1 4-1 5.500 0" stroke="#ffb080" stroke-width="1" fill="none"/></symbol>
<symbol id="s-faceg" viewBox="0 0 16 16"><circle cx="8" cy="8" r="7.400" fill="url(#gFaceG)"/><path d="M4 5.500h2.500M9.500 5.500h2.500" stroke="#084c08" stroke-width="1.200"/><path d="M4.500 8.500h7c-.3 3-1.800 4.500-3.500 4.500s-3.200-1.500-3.500-4.500z" fill="#d01818"/><path d="M4.500 8.500h7" stroke="#084c08" stroke-width=".9"/></symbol>
<symbol id="s-faceo" viewBox="0 0 16 16"><circle cx="8" cy="8" r="7.400" fill="url(#gFaceO)"/><path d="M5.500 4.200v3.200M10.500 4.200v3.200" stroke="#201000" stroke-width="1.600"/><path d="M4.200 3.800l2.300 1M11.800 3.800l-2.300 1" stroke="#603000" stroke-width=".7"/><path d="M5 12c.8-1.800 5.200-1.800 6 0" stroke="#201000" stroke-width="1.400" fill="none"/></symbol>
<symbol id="s-gball" viewBox="0 0 17 17"><circle cx="8.500" cy="8.500" r="7.600" fill="url(#gBall)"/></symbol>
<symbol id="s-pencil" viewBox="0 0 21 21"><circle cx="10.500" cy="10.500" r="9.500" fill="#e8f0f8" stroke="#a8b8c8" stroke-width="1"/><circle cx="10.500" cy="10.500" r="7.500" fill="#f8fcff"/><path d="M13.500 4.500l3 3-7 7-4 1 1-4z" fill="#385898"/><path d="M6.500 11.500l3 3-4 1z" fill="#f8d040"/><path d="M13.500 4.500l3 3-1.200 1.200-3-3z" fill="#203868"/></symbol>
<symbol id="s-tv" viewBox="0 0 19 18"><path d="M6 1l3.500 3.500 3.500-3.500" stroke="#a0a0a0" stroke-width="1.300" fill="none"/><rect x="1.500" y="4.500" width="16" height="12" rx="2" fill="#c8c8c8" stroke="#a0a0a0" stroke-width="1"/><rect x="4" y="7" width="9" height="7" fill="#f0f0f0"/><path d="M15 8v.1M15 11v.1" stroke="#909090" stroke-width="1.500" stroke-linecap="round"/></symbol>
<symbol id="s-lvstar" viewBox="0 0 17 17"><path d="M8.500 1l2.300 4.800 5.200.7-3.800 3.700.9 5.300-4.600-2.500-4.600 2.500.9-5.300-3.800-3.700 5.200-.7z" fill="#ffe060" stroke="#f08a10" stroke-width="1.500" stroke-linejoin="round"/></symbol>
</defs></svg>
<div id="top"></div>
<svg class="i" style="left:2px;top:4px" width="20" height="20" ><use href="#s-bc"/></svg><div class="t" style="left:27px;top:4px;font-size:15px;letter-spacing:.5px"><span class="z" style="width:2em">下载</span>:20 kB/s, <span class="z" style="width:2em">上传</span>:3545 kB/s - BitComet(<span class="z" style="width:4em">比特彗星</span>) 1.53 (Administrator)</div>
<svg class="i" style="left:1760px;top:3px" width="140" height="22"><path d="M5.5 10.5h12" stroke="#000" stroke-width="1.2" fill="none"/><path d="M63.5 7.5h9v9h-9zM65.500 7.500v-2h9v9h-2" stroke="#000" stroke-width="1.2" fill="none"/><path d="M122.500 5.500l11.500 11.500M134 5.500l-11.500 11.500" stroke="#000" stroke-width="1.200" fill="none"/></svg>
<div class="t" style="left:7px;top:32px;letter-spacing:-.2px"><span class="z" style="width:2em">文件</span>(F)</div>
<div class="t" style="left:69px;top:32px;letter-spacing:-.2px"><span class="z" style="width:2em">查看</span>(V)</div>
<div class="t" style="left:133px;top:32px;letter-spacing:-.2px"><span class="z" style="width:5em">彗星通行证</span>(C)</div>
<div class="t" style="left:242px;top:32px;letter-spacing:-.2px"><span class="z" style="width:2em">工具</span>(T)</div>
<div class="t" style="left:305px;top:32px;letter-spacing:-.2px"><span class="z" style="width:2em">帮助</span>(H)</div>
<div class="tbhl" style="left:156px;top:54px;width:56px;height:56px"></div>
<div class="vsep" style="left:150px;top:56px;height:53px"></div>
<div class="vsep" style="left:214px;top:56px;height:53px"></div>
<div class="vsep" style="left:345px;top:56px;height:53px"></div>
<svg class="i" style="left:19px;top:58px" width="29" height="29" ><use href="#s-torrent"/></svg><div class="t c" style="left:-7px;width:80px;top:89px;font-size:16px;letter-spacing:.65px;margin-left:.3px">Torrent</div>
<svg class="i" style="left:72.3px;top:57px" width="28" height="30" ><use href="#s-magnet"/></svg><div class="t c" style="left:46px;width:80px;top:89px"><span class="z" style="width:2em">磁链</span></div>
<svg class="i" style="left:114px;top:58px" width="26" height="30" ><use href="#s-make"/></svg><div class="t c" style="left:87px;width:80px;top:89px"><span class="z" style="width:2em">制作</span></div>
<svg class="i" style="left:171px;top:59px" width="29" height="28" ><use href="#s-star"/></svg><div class="t c" style="left:144px;width:80px;top:89px"><span class="z" style="width:3em">收藏夹</span></div>
<svg class="i" style="left:226px;top:58px" width="29" height="29" ><use href="#s-start"/></svg><div class="t c dis" style="left:200px;width:80px;top:89px"><span class="z" style="width:2em">开始</span></div>
<svg class="i" style="left:267px;top:58px" width="29" height="29" ><use href="#s-stop"/></svg><div class="t c" style="left:241px;width:80px;top:89px"><span class="z" style="width:2em">停止</span></div>
<svg class="i" style="left:310px;top:58px" width="26" height="29" ><use href="#s-del"/></svg><div class="t c" style="left:282px;width:80px;top:89px"><span class="z" style="width:2em">删除</span></div>
<svg class="i" style="left:357px;top:59px" width="27" height="27" ><use href="#s-opt"/></svg><div class="t c" style="left:331px;width:80px;top:89px"><span class="z" style="width:2em">选项</span></div>
<svg class="i" style="left:398px;top:58px" width="29" height="29" ><use href="#s-exit"/></svg><div class="t c" style="left:372px;width:80px;top:89px"><span class="z" style="width:2em">退出</span></div>
<div id="lp"><div class="tabstrip"></div></div>
<div class="tbhl" style="left:2px;top:114px;width:65px;height:25px"></div>
<svg class="i" style="left:5.5px;top:117.5px" width="20" height="18.5" ><use href="#s-star"/></svg><div class="t" style="left:30px;top:118px"><span class="z" style="width:2em">频道</span></div>
<svg class="i" style="left:72px;top:117px" width="19" height="20" ><use href="#s-ie"/></svg><div class="t" style="left:94px;top:118px">IE</div>
<div style="position:absolute;left:51px;top:185px;width:72px;height:22px;background:#f0f0f0"></div>
<svg class="i" style="left:7px;top:142px" width="18" height="20" ><use href="#s-docs"/></svg><div class="t" style="left:30px;top:143px"><span class="z" style="width:4em">全部任务</span> (8)</div>
<svg class="i" style="left:29px;top:166px" width="18" height="18" ><use href="#s-down"/></svg><div class="t" style="left:53px;top:165px"><span class="z" style="width:4em">正在下载</span> (2)</div>
<svg class="i" style="left:29px;top:188px" width="18" height="18" ><use href="#s-check"/></svg><div class="t" style="left:53px;top:187px"><span class="z" style="width:3em">已完成</span> (6)</div>
<svg class="i" style="left:29px;top:210px" width="19" height="18" ><use href="#s-updown"/></svg><div class="t" style="left:53px;top:209px"><span class="z" style="width:4em">正在运行</span> (8)</div>
<svg class="i" style="left:5px;top:230px" width="19" height="20" ><use href="#s-clockdoc"/></svg><div class="t" style="left:30px;top:231px"><span class="z" style="width:4em">种子存档</span> (7)</div>
<svg class="i" style="left:6px;top:253px" width="19" height="18" ><use href="#s-folder"/></svg><div class="t" style="left:30px;top:253px"><span class="z" style="width:4em">种子市场</span></div>
<svg class="i" style="left:30px;top:274px" width="17" height="19" ><use href="#s-updoc"/></svg><div class="t" style="left:53px;top:275px"><span class="z" style="width:4em">我的共享</span> (5)</div>
<svg class="i" style="left:30px;top:296px" width="17" height="19" ><use href="#s-downdoc"/></svg><div class="t" style="left:53px;top:297px"><span class="z" style="width:4em">他人共享</span></div>
<div id="up">
<div class="hd"></div>
<div class="t" style="left:14px;top:9px;font-weight:bold;font-size:15px;color:#ff6a10">hnoycy</div>
<div class="t" style="left:12px;top:33px;font-weight:bold;font-size:8.5px;letter-spacing:.1px;color:#1a1a1a;line-height:12px;height:12px;transform:scaleX(1.08);transform-origin:0 0">EXP</div>
<div class="xp"><div></div></div>
<div class="t" style="left:137px;top:28px;font-size:15.5px">(29%)</div>
<div class="mid"></div>
<div class="btn b1"></div>
<div class="btn b2"></div>
<svg class="i" style="left:70px;top:51px" width="21" height="21"><use href="#s-pencil"/></svg>
<div class="t" style="left:95px;top:52px;font-size:15px;color:#1c2434;text-shadow:.3px 0 0 #1c2434"><span class="z" style="width:2em">信息</span></div>
<svg class="i" style="left:71px;top:82px" width="19" height="18"><use href="#s-tv"/></svg>
<div class="t" style="left:94px;top:82px;font-size:15px;color:#a4a4a4;text-shadow:.3px 0 0 #a4a4a4"><span class="z" style="width:2em">服務</span></div>
<div class="rows">
<div class="rw"><span><span class="z" style="width:4em">當前等級</span>:</span></div>
<div class="rw"><span><span class="z" style="width:4em">當前積分</span>:</span><i>86</i></div>
<div class="rw"><span><span class="z" style="width:4em">等級稱號</span>:</span><i><span class="z" style="width:4em">彗星新兵</span></i></div>
<div class="rw"><span><span class="z" style="width:4em">全球排名</span>:</span><i>4031784</i></div>
</div>
<svg class="i" style="left:103px;top:114px" width="15.500" height="15.500"><use href="#s-lvstar"/></svg>
</div>
<div class="tbhl" style="left:258px;top:112px;width:31px;height:25px"></div>
<svg class="i" style="left:200px;top:115px" width="18" height="20" ><use href="#s-docs"/></svg><svg class="i" style="left:231px;top:118px" width="18" height="17" ><use href="#s-down"/></svg><svg class="i" style="left:264px;top:118px" width="17" height="16" ><use href="#s-check"/></svg><svg class="i" style="left:291px;top:118px" width="21" height="17" ><use href="#s-updown"/></svg><svg class="i" style="left:330.5px;top:115px" width="18" height="21" ><use href="#s-clockdoc"/></svg><svg class="i" style="left:363px;top:115px" width="17" height="20" ><use href="#s-updoc"/></svg><svg class="i" style="left:393px;top:115px" width="17" height="20" ><use href="#s-downdoc"/></svg><svg class="i" style="left:432px;top:121px" width="21" height="13" ><use href="#s-tag"/></svg><div class="vsep" style="left:322px;top:114px;height:22px"></div>
<div class="vsep" style="left:423px;top:114px;height:22px"></div>
<div class="t" style="left:456px;top:116px"><span class="z" style="width:2em">标签</span></div>
<div id="search"><span><span class="z" style="width:4em">搜索任务</span></span></div>
<svg class="i" style="left:682px;top:122px" width="14.5" height="14.5" ><use href="#s-search"/></svg><div id="tl">
<div class="hl" style="left:326px"></div><div class="cl" style="left:327px"></div>
<div class="hl" style="left:429px"></div><div class="cl" style="left:430px"></div>
<div class="hl" style="left:532px"></div><div class="cl" style="left:533px"></div>
<div class="hl" style="left:637px"></div><div class="cl" style="left:638px"></div>
<div class="hl" style="left:810px"></div><div class="cl" style="left:811px"></div>
<div class="hl" style="left:950px"></div><div class="cl" style="left:951px"></div>
<div class="hl" style="left:1069px"></div><div class="cl" style="left:1070px"></div>
<div class="hl" style="left:1178px"></div><div class="cl" style="left:1179px"></div>
<div class="hl" style="left:1353px"></div><div class="cl" style="left:1354px"></div>
<div class="hl" style="left:1554px"></div><div class="cl" style="left:1555px"></div>
<div class="hl" style="left:1719px"></div><div class="cl" style="left:1720px"></div>
<div class="rl" style="top:50px"></div>
<div class="rl" style="top:74px"></div>
<div class="rl" style="top:98px"></div>
<div class="rl" style="top:122px"></div>
<div class="rl" style="top:146px"></div>
<div class="rl" style="top:170px"></div>
<div class="rl" style="top:194px"></div>
<div class="rl" style="top:218px"></div>
<div class="rl" style="top:242px"></div>
<div class="rl" style="top:266px"></div>
<div class="rl" style="top:290px"></div>
<div class="rl" style="top:314px"></div>
<div class="rl" style="top:338px"></div>
<div class="sel" style="top:123px"></div>
<div class="cl2" style="left:327px;top:124px"></div>
<div class="cl2" style="left:430px;top:124px"></div>
<div class="cl2" style="left:533px;top:124px"></div>
<div class="cl2" style="left:638px;top:124px"></div>
<div class="cl2" style="left:811px;top:124px"></div>
<div class="cl2" style="left:951px;top:124px"></div>
<div class="cl2" style="left:1070px;top:124px"></div>
<div class="cl2" style="left:1179px;top:124px"></div>
<div class="cl2" style="left:1354px;top:124px"></div>
<div class="cl2" style="left:1555px;top:124px"></div>
<svg class="i" style="left:159px;top:3px" width="11" height="6"><path d="M.5 5.500l5-5 5 5" stroke="#555" fill="none"/></svg>
<div class="t" style="left:7px;top:5px"><span class="z" style="width:2em">名称</span></div>
<div class="t c" style="left:328px;width:100px;top:5px"><span class="z" style="width:2em">评论</span></div>
<div class="t c" style="left:431px;width:100px;top:5px"><span class="z" style="width:2em">截图</span></div>
<div class="t r" style="left:433px;width:200px;top:5px"><span class="z" style="width:2em">预览</span></div>
<div class="t r" style="left:605px;width:200px;top:5px"><span class="z" style="width:2em">大小</span></div>
<div class="t r" style="left:745px;width:200px;top:5px"><span class="z" style="width:2em">进度</span></div>
<div class="t r" style="left:864px;width:200px;top:5px"><span class="z" style="width:4em">下载速度</span></div>
<div class="t r" style="left:973px;width:200px;top:5px"><span class="z" style="width:4em">上传速度</span></div>
<div class="t r" style="left:1148px;width:200px;top:5px"><span class="z" style="width:2em">需时</span></div>
<div class="t r" style="left:1349px;width:200px;top:5px"><span class="z" style="width:2em">种子</span>/<span class="z" style="width:2em">用户</span>[<span class="z" style="width:1em">总</span>]</div>
<div class="t r" style="left:1515px;width:200px;top:5px"><span class="z" style="width:3em">分享率</span></div>
<svg class="i" style="left:974px;top:7px" width="16" height="15" ><use href="#s-dng"/></svg><svg class="i" style="left:1083px;top:7px" width="16" height="15" ><use href="#s-upo"/></svg><svg class="i" style="left:6px;top:32px" width="18" height="16" ><use href="#s-upo2"/></svg><div class="t m" style="left:29px;top:30px;letter-spacing:.1px"><span class="z" style="width:8em">《为师者》周楷程</span> <span class="z" style="width:3em">俞竣文</span> <span class="z" style="width:3em">熊浩俊</span>.mp4 <b>[hn...</b></div>
<svg class="i" style="left:369px;top:33px" width="20" height="15" ><use href="#s-mail"/></svg><svg class="i" style="left:472px;top:32px" width="19" height="17" ><use href="#s-img"/></svg><svg class="i" style="left:578px;top:32px" width="14" height="14" ><use href="#s-play"/></svg><div class="t r n" style="left:605px;width:200px;top:30px">478.84 MB</div>
<div class="t r n" style="left:745px;width:200px;top:30px">100%</div>
<div class="t r n" style="left:973px;width:200px;top:30px">0kB/s</div>
<div class="t r n" style="left:1349px;width:200px;top:30px">0/0[0/5]</div>
<div class="t r n" style="left:1515px;width:200px;top:30px">1.00</div>
<svg class="i" style="left:6px;top:56px" width="18" height="16" ><use href="#s-upo2"/></svg><div class="t m" style="left:29px;top:54px">2017<span class="z" style="width:4em">毕业视频</span>.mp4 <b>[oycy]</b></div>
<svg class="i" style="left:369px;top:57px" width="20" height="15" ><use href="#s-mail"/></svg><svg class="i" style="left:472px;top:56px" width="19" height="17" ><use href="#s-img"/></svg><svg class="i" style="left:578px;top:56px" width="14" height="14" ><use href="#s-play"/></svg><div class="t r n" style="left:605px;width:200px;top:54px">330.70 MB</div>
<div class="t r n" style="left:745px;width:200px;top:54px">100%</div>
<div class="t r n" style="left:973px;width:200px;top:54px">0kB/s</div>
<div class="t r n" style="left:1349px;width:200px;top:54px">0/0[0/13]</div>
<div class="t r n" style="left:1515px;width:200px;top:54px">0.04</div>
<svg class="i" style="left:6px;top:80px" width="18" height="16" ><use href="#s-upo2"/></svg><div class="t m" style="left:29px;top:78px">2018 <span class="z" style="width:3em">心理剧</span>.mp4 <b>[oycy]</b></div>
<svg class="i" style="left:369px;top:81px" width="20" height="15" ><use href="#s-mail"/></svg><svg class="i" style="left:472px;top:80px" width="19" height="17" ><use href="#s-img"/></svg><svg class="i" style="left:578px;top:80px" width="14" height="14" ><use href="#s-play"/></svg><div class="t r n" style="left:605px;width:200px;top:78px">1.06 GB</div>
<div class="t r n" style="left:745px;width:200px;top:78px">100%</div>
<div class="t r n" style="left:973px;width:200px;top:78px">4kB/s</div>
<div class="t r n" style="left:1349px;width:200px;top:78px">0/1[0/8]</div>
<div class="t r n" style="left:1515px;width:200px;top:78px">1.01</div>
<svg class="i" style="left:6px;top:104px" width="18" height="16" ><use href="#s-upo2"/></svg><div class="t m" style="left:29px;top:102px">mpcstar_setup.exe <b>[MPCStar]</b></div>
<svg class="i" style="left:367px;top:105px" width="20" height="15" ><use href="#s-mail2"/></svg><svg class="i" style="left:576px;top:102px" width="19" height="18" ><use href="#s-upload"/></svg><div class="t r n" style="left:605px;width:200px;top:102px">47.57 MB</div>
<div class="t r n" style="left:745px;width:200px;top:102px">100%</div>
<div class="t r n" style="left:973px;width:200px;top:102px">0kB/s</div>
<div class="t r n" style="left:1349px;width:200px;top:102px">0/0[0/27]</div>
<div class="t r n" style="left:1515px;width:200px;top:102px">0.00</div>
<svg class="i" style="left:6px;top:128px" width="18" height="16" ><use href="#s-upo2"/></svg><div class="t m" style="left:29px;top:126px">Total.War.WARHAMMER.II.v1.5.0.Curse...</div>
<svg class="i" style="left:369px;top:129px" width="20" height="15" ><use href="#s-mail"/></svg><div class="t r n" style="left:605px;width:200px;top:126px">37.67 GB</div>
<div class="t r n" style="left:745px;width:200px;top:126px">100%</div>
<div class="t r n" style="left:973px;width:200px;top:126px">3556kB/s</div>
<div class="t r n" style="left:1349px;width:200px;top:126px">0/28[1/148]</div>
<div class="t r n" style="left:1515px;width:200px;top:126px">0.06</div>
<svg class="i" style="left:6px;top:152px" width="18" height="16" ><use href="#s-upo2"/></svg><div class="t m" style="left:29px;top:150px"><span class="z" style="width:4em">帝玖合集</span>.mp4</div>
<svg class="i" style="left:369px;top:153px" width="20" height="15" ><use href="#s-mail"/></svg><svg class="i" style="left:472px;top:152px" width="19" height="17" ><use href="#s-img"/></svg><svg class="i" style="left:578px;top:152px" width="14" height="14" ><use href="#s-play"/></svg><div class="t r n" style="left:605px;width:200px;top:150px">1.11 GB</div>
<div class="t r n" style="left:745px;width:200px;top:150px">100%</div>
<div class="t r n" style="left:973px;width:200px;top:150px">0kB/s</div>
<div class="t r n" style="left:1349px;width:200px;top:150px">0/0[0/1]</div>
<div class="t r n" style="left:1515px;width:200px;top:150px">0.00</div>
</div>
<div id="bp"></div>
<div class="tab" style="left:198px;top:474px;width:67px;height:24px"></div>
<svg class="i" style="left:204px;top:478px" width="20" height="18" ><use href="#s-comment"/></svg><div class="t" style="left:231px;top:477px"><span class="z" style="width:2em">评论</span></div>
<div class="tab" style="left:265px;top:474px;width:68px;height:24px"></div>
<svg class="i" style="left:274px;top:476px" width="17" height="19" ><use href="#s-summary"/></svg><div class="t" style="left:299px;top:477px"><span class="z" style="width:2em">摘要</span></div>
<div class="tab" style="left:333px;top:474px;width:68px;height:24px"></div>
<svg class="i" style="left:341px;top:476px" width="19" height="19" ><use href="#s-files"/></svg><div class="t" style="left:367px;top:477px"><span class="z" style="width:2em">文件</span></div>
<div class="tab" style="left:401px;top:474px;width:83px;height:24px"></div>
<svg class="i" style="left:409px;top:478px" width="19" height="18" ><use href="#s-server"/></svg><div class="t" style="left:435px;top:477px"><span class="z" style="width:3em">服务器</span></div>
<div class="tab" style="left:484px;top:474px;width:68px;height:24px"></div>
<svg class="i" style="left:492px;top:476px" width="20" height="21" ><use href="#s-log"/></svg><div class="t" style="left:518px;top:477px"><span class="z" style="width:2em">日志</span></div>
<div class="tab tsel" style="left:551px;top:472px;width:72px;height:28px"></div>
<svg class="i" style="left:560px;top:474px" width="17" height="20" ><use href="#s-users"/></svg><div class="t" style="left:586px;top:476px"><span class="z" style="width:2em">用户</span></div>
<div class="tab" style="left:622px;top:474px;width:66px;height:24px;border-right:1px solid #d9d9d9"></div>
<svg class="i" style="left:626px;top:476px" width="22" height="20" ><use href="#s-stats"/></svg><div class="t" style="left:654px;top:477px"><span class="z" style="width:2em">统计</span></div>
<div id="pl">
<div class="phl" style="left:289px"></div><div class="pcl" style="left:289px"></div>
<div class="phl" style="left:365px"></div><div class="pcl" style="left:365px"></div>
<div class="phl" style="left:532px"></div><div class="pcl" style="left:532px"></div>
<div class="phl" style="left:632px"></div><div class="pcl" style="left:632px"></div>
<div class="phl" style="left:737px"></div><div class="pcl" style="left:737px"></div>
<div class="phl" style="left:857px"></div><div class="pcl" style="left:857px"></div>
<div class="phl" style="left:972px"></div><div class="pcl" style="left:972px"></div>
<div class="phl" style="left:1057px"></div><div class="pcl" style="left:1057px"></div>
<div class="phl" style="left:1188px"></div><div class="pcl" style="left:1188px"></div>
<div class="phl" style="left:1287px"></div><div class="pcl" style="left:1287px"></div>
<div class="phl" style="left:1465px"></div><div class="pcl" style="left:1465px"></div>
<div class="phl" style="left:1608px"></div><div class="pcl" style="left:1608px"></div>
<div class="t" style="left:7px;top:3px">IP</div>
<div class="t r" style="left:160px;width:200px;top:3px"><span class="z" style="width:2em">进度</span></div>
<div class="t r" style="left:327px;width:200px;top:3px"><span class="z" style="width:4em">用户状态</span></div>
<div class="t r" style="left:427px;width:200px;top:3px"><span class="z" style="width:4em">下载速度</span></div>
<div class="t r" style="left:532px;width:200px;top:3px"><span class="z" style="width:4em">上传速度</span></div>
<div class="t r" style="left:652px;width:200px;top:3px"><span class="z" style="width:4em">下载大小</span></div>
<div class="t r" style="left:767px;width:200px;top:3px"><span class="z" style="width:4em">上传大小</span></div>
<div class="t r" style="left:851px;width:200px;top:3px"><span class="z" style="width:2em">发起</span></div>
<div class="t r" style="left:982px;width:200px;top:3px"><span class="z" style="width:6em">对方下载速度</span></div>
<div class="t r" style="left:1081px;width:200px;top:3px"><span class="z" style="width:4em">连接时间</span></div>
<div class="t" style="left:1293px;top:3px"><span class="z" style="width:3em">客户端</span></div>
<div class="t" style="left:1472px;top:3px"><span class="z" style="width:2em">状态</span></div>
<svg class="i" style="left:324px;top:3px" width="11" height="6"><path d="M.5 .5l5 5 5-5" stroke="#555" fill="none"/></svg>
<svg class="i" style="left:7.5px;top:29.7px" width="16" height="16" ><use href="#s-faceg"/></svg><div class="t " style="left:28px;top:28px"><span class="z" style="width:2em">本机</span></div>
<svg class="bar" style="top:26px" width="166" height="22" viewBox="0 0 166 22" preserveAspectRatio="none"><rect width="166" height="22" fill="#0000ff"/></svg>
<div class="t r n" style="left:158px;width:200px;top:28px">100.0%</div>
<div class="t r n" style="left:530px;width:200px;top:28px">3556 kB/s</div>
<div class="t r n" style="left:650px;width:200px;top:28px">0 KB</div>
<div class="t r n" style="left:765px;width:200px;top:28px">2,378,886 KB</div>
<div class="t r n" style="left:1079px;width:200px;top:28px">0:13:50</div>
<div class="t n" style="left:1293px;top:28px">BitComet 1.53</div>
<div class="t n bl" style="left:28px;top:51px;letter-spacing:.25px">[-]----- bt_connected (28)</div>
<div class="t r n bl" style="left:425px;width:200px;top:51px">20 kB/s</div>
<div class="t r n bl" style="left:530px;width:200px;top:51px">3593 kB/s</div>
<svg class="i" style="left:7.5px;top:75.7px" width="16" height="16" ><use href="#s-faceo"/></svg><div class="t n" style="left:28px;top:74px">1.199.129.157:14539</div>
<svg class="bar" style="top:72px" width="166" height="22" viewBox="0 0 166 22" preserveAspectRatio="none"><rect width="166" height="22" fill="#0000ff"/><rect x="161" width="2.2" height="22" fill="#ffffff"/></svg>
<div class="t r n" style="left:158px;width:200px;top:74px">98.8%</div>
<div class="t r n" style="left:530px;width:200px;top:74px">187 kB/s</div>
<div class="t r n" style="left:650px;width:200px;top:74px">0 KB</div>
<div class="t r n" style="left:765px;width:200px;top:74px">197,872 KB</div>
<div class="t r " style="left:849px;width:200px;top:74px"><span class="z" style="width:2em">远程</span></div>
<div class="t r n" style="left:980px;width:200px;top:74px">546 kB/s</div>
<div class="t r n" style="left:1079px;width:200px;top:74px">0:13:20</div>
<div class="t n" style="left:1293px;top:74px">XunLei 0100</div>
<div class="t n" style="left:1472px;top:74px;letter-spacing:-.8px">_ci_</div>
<svg class="i" style="left:7.5px;top:98.7px" width="16" height="16" ><use href="#s-faceo"/></svg><div class="t n" style="left:28px;top:97px">61.51.68.161:9489</div>
<svg class="bar" style="top:95px" width="166" height="22" viewBox="0 0 166 22" preserveAspectRatio="none"><rect width="166" height="22" fill="#0000ff"/><rect x="0" width="1" height="22" fill="#4848ff"/><rect x="1" width="2" height="22" fill="#2a2aff"/><rect x="75" width="1.2" height="22" fill="#4848ff"/><rect x="76.2" width="1.8" height="22" fill="#2a2aff"/><rect x="114" width="0.9" height="22" fill="#4848ff"/><rect x="114.9" width="1.9" height="22" fill="#3838ff"/><rect x="116.8" width="0.7" height="22" fill="#1818ff"/><rect x="117.5" width="1.0" height="22" fill="#1818ff"/><rect x="118.5" width="1.4" height="22" fill="#1818ff"/><rect x="119.8" width="1.5" height="22" fill="#2a2aff"/><rect x="121.3" width="1.8" height="22" fill="#2a2aff"/><rect x="123.1" width="1.5" height="22" fill="#3838ff"/><rect x="125.3" width="1.8" height="22" fill="#3838ff"/><rect x="132.7" width="1.8" height="22" fill="#2a2aff"/><rect x="134.5" width="1.3" height="22" fill="#1818ff"/><rect x="138.7" width="1.4" height="22" fill="#1818ff"/><rect x="144.9" width="1.5" height="22" fill="#4848ff"/><rect x="150.6" width="1.4" height="22" fill="#2a2aff"/><rect x="153.3" width="1.3" height="22" fill="#2a2aff"/><rect x="154.6" width="1.2" height="22" fill="#4848ff"/><rect x="155.8" width="1.2" height="22" fill="#2a2aff"/><rect x="159.3" width="0.7" height="22" fill="#2a2aff"/></svg>
<div class="t r n" style="left:158px;width:200px;top:97px">96.1%</div>
<div class="t r n" style="left:530px;width:200px;top:97px">49 kB/s</div>
<div class="t r n" style="left:650px;width:200px;top:97px">0 KB</div>
<div class="t r n" style="left:765px;width:200px;top:97px">115,552 KB</div>
<div class="t r " style="left:849px;width:200px;top:97px"><span class="z" style="width:2em">远程</span></div>
<div class="t r n" style="left:980px;width:200px;top:97px">136 kB/s</div>
<div class="t r n" style="left:1079px;width:200px;top:97px">0:13:50</div>
<div class="t n" style="left:1293px;top:97px">XunLei 0012</div>
<div class="t n" style="left:1472px;top:97px;letter-spacing:-.8px">_ci_</div>
<svg class="i" style="left:7.5px;top:121.7px" width="16" height="16" ><use href="#s-faceo"/></svg><div class="t n" style="left:28px;top:120px">171.105.71.161:8330</div>
<svg class="bar" style="top:118px" width="166" height="22" viewBox="0 0 166 22" preserveAspectRatio="none"><rect width="166" height="22" fill="#0000ff"/><rect x="141" width="2.5" height="22" fill="#ffffff"/><rect x="143.5" width="2.1" height="22" fill="#e8e8e8"/><rect x="155" width="2" height="22" fill="#e8e8e8"/><rect x="157" width="1.5" height="22" fill="#ffffff"/></svg>
<div class="t r n" style="left:158px;width:200px;top:120px">95.3%</div>
<div class="t r n" style="left:530px;width:200px;top:120px">86 kB/s</div>
<div class="t r n" style="left:650px;width:200px;top:120px">0 KB</div>
<div class="t r n" style="left:765px;width:200px;top:120px">133,104 KB</div>
<div class="t r " style="left:849px;width:200px;top:120px"><span class="z" style="width:2em">远程</span></div>
<div class="t r n" style="left:980px;width:200px;top:120px">136 kB/s</div>
<div class="t r n" style="left:1079px;width:200px;top:120px">0:12:40</div>
<div class="t n" style="left:1293px;top:120px">XunLei 0100</div>
<div class="t n" style="left:1472px;top:120px;letter-spacing:-.8px">_ci_</div>
<svg class="i" style="left:7.5px;top:144.7px" width="16" height="16" ><use href="#s-faceo"/></svg><div class="t n" style="left:28px;top:143px">113.104.188.25:8501</div>
<svg class="bar" style="top:141px" width="166" height="22" viewBox="0 0 166 22" preserveAspectRatio="none"><rect width="166" height="22" fill="#0000ff"/><rect x="123.6" width="39.7" height="22" fill="#d4d4ff"/><rect x="123.6" width="1.4" height="22" fill="#4848ff"/><rect x="125" width="1.5" height="22" fill="#7878ff"/><rect x="126.5" width="1.5" height="22" fill="#b8b8ff"/><rect x="132" width="1" height="22" fill="#7878ff"/><rect x="133" width="3.5" height="22" fill="#6a6aff"/><rect x="136.5" width="1.0" height="22" fill="#b8b8ff"/><rect x="163.3" width="2.7" height="22" fill="#4848ff"/><rect x="162.5" width="0.8" height="22" fill="#b8b8ff"/><rect x="142.9" width="0.7" height="22" fill="#e0e0ff"/><rect x="145.2" width="0.8" height="22" fill="#e0e0ff"/><rect x="146.0" width="1.2" height="22" fill="#e0e0ff"/><rect x="147.2" width="0.7" height="22" fill="#bcbcff"/><rect x="150.9" width="1.3" height="22" fill="#c4c4ff"/><rect x="152.2" width="1.0" height="22" fill="#e0e0ff"/><rect x="153.1" width="1.8" height="22" fill="#e0e0ff"/><rect x="158.9" width="1.9" height="22" fill="#bcbcff"/></svg>
<div class="t r n" style="left:158px;width:200px;top:143px">78.9%</div>
<div class="t r n" style="left:530px;width:200px;top:143px">197 kB/s</div>
<div class="t r n" style="left:650px;width:200px;top:143px">0 KB</div>
<div class="t r n" style="left:765px;width:200px;top:143px">108,256 KB</div>
<div class="t r " style="left:849px;width:200px;top:143px"><span class="z" style="width:2em">远程</span></div>
<div class="t r n" style="left:980px;width:200px;top:143px">136 kB/s</div>
<div class="t r n" style="left:1079px;width:200px;top:143px">0:13:47</div>
<div class="t n" style="left:1293px;top:143px">XunLei 0012</div>
<div class="t n" style="left:1472px;top:143px;letter-spacing:-.8px">_ci_</div>
<svg class="i" style="left:7.5px;top:167.7px" width="16" height="16" ><use href="#s-faceo"/></svg><div class="t n" style="left:28px;top:166px">59.60.90.187:9960</div>
<svg class="bar" style="top:164px" width="166" height="22" viewBox="0 0 166 22" preserveAspectRatio="none"><rect width="166" height="22" fill="#0000ff"/><rect x="124.8" width="1.2" height="22" fill="#ffffff"/><rect x="126" width="6.3" height="22" fill="#e8e8e8"/><rect x="137" width="29" height="22" fill="#e8e8e8"/></svg>
<div class="t r n" style="left:158px;width:200px;top:166px">78.0%</div>
<div class="t r n" style="left:530px;width:200px;top:166px">210 kB/s</div>
<div class="t r n" style="left:650px;width:200px;top:166px">0 KB</div>
<div class="t r n" style="left:765px;width:200px;top:166px">241,056 KB</div>
<div class="t r " style="left:849px;width:200px;top:166px"><span class="z" style="width:2em">远程</span></div>
<div class="t r n" style="left:980px;width:200px;top:166px">819 kB/s</div>
<div class="t r n" style="left:1079px;width:200px;top:166px">0:13:50</div>
<div class="t n" style="left:1293px;top:166px">XunLei 0100</div>
<div class="t n" style="left:1472px;top:166px;letter-spacing:-.8px">_ci_</div>
<svg class="i" style="left:7.5px;top:190.7px" width="16" height="16" ><use href="#s-faceo"/></svg><div class="t n" style="left:28px;top:189px">116.31.200.53:11552</div>
<svg class="bar" style="top:187px" width="166" height="22" viewBox="0 0 166 22" preserveAspectRatio="none"><rect width="166" height="22" fill="#0000ff"/><rect x="117" width="2" height="22" fill="#e8e8e8"/><rect x="117" width="0.8" height="22" fill="#ffffff"/><rect x="120.9" width="15.6" height="22" fill="#e8e8e8"/><rect x="127" width="0.8" height="22" fill="#d4d4ff"/><rect x="141" width="4.4" height="22" fill="#e8e8e8"/><rect x="150" width="13.3" height="22" fill="#e8e8e8"/><rect x="165" width="1" height="22" fill="#e8e8e8"/></svg>
<div class="t r n" style="left:158px;width:200px;top:189px">77.3%</div>
<div class="t r n" style="left:530px;width:200px;top:189px">135 kB/s</div>
<div class="t r n" style="left:650px;width:200px;top:189px">0 KB</div>
<div class="t r n" style="left:765px;width:200px;top:189px">111,248 KB</div>
<div class="t r " style="left:849px;width:200px;top:189px"><span class="z" style="width:2em">远程</span></div>
<div class="t r n" style="left:980px;width:200px;top:189px">409 kB/s</div>
<div class="t r n" style="left:1079px;width:200px;top:189px">0:11:50</div>
<div class="t n" style="left:1293px;top:189px">XunLei 0100</div>
<div class="t n" style="left:1472px;top:189px;letter-spacing:-.8px">_ci_</div>
<svg class="i" style="left:7.5px;top:213.7px" width="16" height="16" ><use href="#s-faceo"/></svg><div class="t n" style="left:28px;top:212px">1.163.64.17:10691</div>
<svg class="bar" style="top:210px" width="166" height="22" viewBox="0 0 166 22" preserveAspectRatio="none"><rect width="166" height="22" fill="#0000ff"/><rect x="113" width="53" height="22" fill="#e8e8e8"/><rect x="113" width="1.2" height="22" fill="#7878ff"/><rect x="114.2" width="1.3" height="22" fill="#b8b8ff"/><rect x="115.5" width="1.5" height="22" fill="#ffffff"/><rect x="117" width="1.5" height="22" fill="#d4d4ff"/><rect x="119.5" width="1.0" height="22" fill="#d4d4ff"/><rect x="121.5" width="0.8" height="22" fill="#b8b8ff"/><rect x="123.5" width="1.1" height="22" fill="#0000ff"/><rect x="126" width="0.8" height="22" fill="#d4d4ff"/><rect x="132.5" width="4.0" height="22" fill="#0000ff"/><rect x="132" width="0.5" height="22" fill="#7878ff"/><rect x="139.5" width="0.7" height="22" fill="#d4d4ff"/><rect x="142.5" width="0.7" height="22" fill="#b8b8ff"/><rect x="145.2" width="0.8" height="22" fill="#7878ff"/><rect x="147.5" width="0.7" height="22" fill="#d4d4ff"/><rect x="150" width="0.6" height="22" fill="#d4d4ff"/><rect x="152.5" width="0.7" height="22" fill="#d4d4ff"/><rect x="155" width="0.6" height="22" fill="#d4d4ff"/><rect x="159" width="4" height="22" fill="#0000ff"/><rect x="163" width="0.6" height="22" fill="#7878ff"/></svg>
<div class="t r n" style="left:158px;width:200px;top:212px">76.1%</div>
<div class="t r n" style="left:530px;width:200px;top:212px"><1 kB/s</div>
<div class="t r n" style="left:650px;width:200px;top:212px">0 KB</div>
<div class="t r n" style="left:765px;width:200px;top:212px">3,488 KB</div>
<div class="t r " style="left:849px;width:200px;top:212px"><span class="z" style="width:2em">远程</span></div>
<div class="t r n" style="left:980px;width:200px;top:212px">546 kB/s</div>
<div class="t r n" style="left:1079px;width:200px;top:212px">0:10:37</div>
<div class="t n" style="left:1293px;top:212px">XunLei 0100</div>
<div class="t n" style="left:1472px;top:212px;letter-spacing:-.8px">_ci_</div>
<svg class="i" style="left:7.5px;top:236.7px" width="16" height="16" ><use href="#s-faceo"/></svg><div class="t n" style="left:28px;top:235px">182.96.250.139:14768</div>
<svg class="bar" style="top:233px" width="166" height="22" viewBox="0 0 166 22" preserveAspectRatio="none"><rect width="166" height="22" fill="#0000ff"/><rect x="56" width="1" height="22" fill="#4848ff"/><rect x="57" width="1" height="22" fill="#2a2aff"/><rect x="58" width="1.2" height="22" fill="#7878ff"/><rect x="59.2" width="1.3" height="22" fill="#4848ff"/><rect x="60.5" width="1.5" height="22" fill="#7878ff"/><rect x="62" width="1" height="22" fill="#b8b8ff"/><rect x="63" width="3" height="22" fill="#ffffff"/><rect x="66" width="1.5" height="22" fill="#0000ff"/><rect x="67.5" width="1.5" height="22" fill="#ffffff"/><rect x="69" width="1.5" height="22" fill="#e8e8e8"/><rect x="84.7" width="1.8" height="22" fill="#ffffff"/><rect x="86.5" width="1.5" height="22" fill="#e8e8e8"/><rect x="102" width="4" height="22" fill="#e8e8e8"/><rect x="102" width="1" height="22" fill="#ffffff"/><rect x="116" width="3" height="22" fill="#e8e8e8"/><rect x="123" width="27" height="22" fill="#e8e8e8"/><rect x="124" width="0.8" height="22" fill="#d4d4ff"/><rect x="126.5" width="0.8" height="22" fill="#b8b8ff"/><rect x="129" width="0.8" height="22" fill="#d4d4ff"/><rect x="131" width="0.6" height="22" fill="#d4d4ff"/><rect x="133" width="0.8" height="22" fill="#b8b8ff"/><rect x="135.5" width="0.7" height="22" fill="#d4d4ff"/><rect x="138" width="0.7" height="22" fill="#d4d4ff"/><rect x="140.5" width="0.7" height="22" fill="#d4d4ff"/><rect x="143" width="0.7" height="22" fill="#b8b8ff"/><rect x="146" width="0.6" height="22" fill="#d4d4ff"/><rect x="154.7" width="11.3" height="22" fill="#e8e8e8"/><rect x="158" width="0.8" height="22" fill="#b8b8ff"/><rect x="159.8" width="0.8" height="22" fill="#7878ff"/><rect x="161.5" width="0.7" height="22" fill="#d4d4ff"/><rect x="163.5" width="1.0" height="22" fill="#0000ff"/></svg>
<div class="t r n" style="left:158px;width:200px;top:235px">69.0%</div>
<div class="t r n" style="left:530px;width:200px;top:235px">154 kB/s</div>
<div class="t r n" style="left:650px;width:200px;top:235px">0 KB</div>
<div class="t r n" style="left:765px;width:200px;top:235px">190,400 KB</div>
<div class="t r " style="left:849px;width:200px;top:235px"><span class="z" style="width:2em">远程</span></div>
<div class="t r n" style="left:980px;width:200px;top:235px">409 kB/s</div>
<div class="t r n" style="left:1079px;width:200px;top:235px">0:13:04</div>
<div class="t n" style="left:1293px;top:235px">XunLei 0100</div>
<div class="t n" style="left:1472px;top:235px;letter-spacing:-.8px">_ci_</div>
<svg class="i" style="left:7.5px;top:259.7px" width="16" height="16" ><use href="#s-faceo"/></svg><div class="t n" style="left:28px;top:258px">117.27.208.156:10617</div>
<svg class="bar" style="top:256px" width="166" height="22" viewBox="0 0 166 22" preserveAspectRatio="none"><rect width="166" height="22" fill="#e8e8e8"/><rect x="0" width="62.5" height="22" fill="#0000ff"/><rect x="62.5" width="1.0" height="22" fill="#7878ff"/><rect x="63.5" width="1.5" height="22" fill="#ffffff"/><rect x="66" width="1" height="22" fill="#0000ff"/><rect x="118.7" width="1.1" height="22" fill="#0000ff"/><rect x="153.9" width="0.7" height="22" fill="#b8b8ff"/></svg>
<div class="t r n" style="left:158px;width:200px;top:258px">39.1%</div>
<div class="t r n" style="left:530px;width:200px;top:258px">233 kB/s</div>
<div class="t r n" style="left:650px;width:200px;top:258px">0 KB</div>
<div class="t r n" style="left:765px;width:200px;top:258px">142,207 KB</div>
<div class="t r " style="left:849px;width:200px;top:258px"><span class="z" style="width:2em">远程</span></div>
<div class="t r n" style="left:980px;width:200px;top:258px">273 kB/s</div>
<div class="t r n" style="left:1079px;width:200px;top:258px">0:12:27</div>
<div class="t n" style="left:1293px;top:258px">XunLei 0100</div>
<div class="t n" style="left:1472px;top:258px;letter-spacing:-.8px">_ci_</div>
<svg class="i" style="left:7.5px;top:282.7px" width="16" height="16" ><use href="#s-faceo"/></svg><div class="t n" style="left:28px;top:281px">117.140.112.128:9800</div>
<svg class="bar" style="top:279px" width="166" height="22" viewBox="0 0 166 22" preserveAspectRatio="none"><rect width="166" height="22" fill="#e8e8e8"/><rect x="0" width="36.3" height="22" fill="#0000ff"/><rect x="36.3" width="0.7" height="22" fill="#ffffff"/><rect x="39.3" width="0.7" height="22" fill="#b8b8ff"/><rect x="57.4" width="4.6" height="22" fill="#0000ff"/></svg>
<div class="t r n" style="left:158px;width:200px;top:281px">24.4%</div>
<div class="t r n" style="left:530px;width:200px;top:281px">9 kB/s</div>
<div class="t r n" style="left:650px;width:200px;top:281px">0 KB</div>
<div class="t r n" style="left:765px;width:200px;top:281px">12,443 KB</div>
<div class="t r " style="left:849px;width:200px;top:281px"><span class="z" style="width:2em">远程</span></div>
<div class="t r n" style="left:980px;width:200px;top:281px">955 kB/s</div>
<div class="t r n" style="left:1079px;width:200px;top:281px">0:13:20</div>
<div class="t n" style="left:1293px;top:281px">XunLei 0100</div>
<div class="t n" style="left:1472px;top:281px;letter-spacing:-.8px">_ci_</div>
<svg class="i" style="left:7.5px;top:305.7px" width="16" height="16" ><use href="#s-faceo"/></svg><div class="t n" style="left:28px;top:304px">182.139.66.218:13913</div>
<svg class="bar" style="top:302px" width="166" height="22" viewBox="0 0 166 22" preserveAspectRatio="none"><rect width="166" height="22" fill="#e8e8e8"/><rect x="0" width="26.2" height="22" fill="#0000ff"/><rect x="26.2" width="1.0" height="22" fill="#4848ff"/><rect x="27.2" width="1.2" height="22" fill="#0000ff"/><rect x="28.4" width="2.5" height="22" fill="#ffffff"/><rect x="29.5" width="0.5" height="22" fill="#d4d4ff"/><rect x="30.9" width="5.2" height="22" fill="#0000ff"/><rect x="36.1" width="2.8" height="22" fill="#ececff"/><rect x="38.9" width="1.9" height="22" fill="#b8b8ff"/><rect x="44" width="1" height="22" fill="#0000ff"/><rect x="48.3" width="1.4" height="22" fill="#7878ff"/><rect x="50.6" width="0.9" height="22" fill="#d4d4ff"/><rect x="59" width="1" height="22" fill="#d4d4ff"/><rect x="61.2" width="1.3" height="22" fill="#b8b8ff"/><rect x="64.2" width="0.9" height="22" fill="#d4d4ff"/><rect x="66" width="1" height="22" fill="#7878ff"/><rect x="70" width="1" height="22" fill="#b8b8ff"/><rect x="73.8" width="1.1" height="22" fill="#d4d4ff"/><rect x="81" width="1" height="22" fill="#d4d4ff"/><rect x="83" width="0.9" height="22" fill="#7878ff"/><rect x="85.3" width="0.9" height="22" fill="#d4d4ff"/><rect x="87.9" width="0.9" height="22" fill="#b8b8ff"/><rect x="92" width="1" height="22" fill="#b8b8ff"/><rect x="101" width="0.9" height="22" fill="#7878ff"/><rect x="110.1" width="0.9" height="22" fill="#d4d4ff"/><rect x="114.2" width="0.6" height="22" fill="#d4d4ff"/><rect x="118" width="1" height="22" fill="#d4d4ff"/><rect x="132.1" width="0.8" height="22" fill="#b8b8ff"/><rect x="145" width="1" height="22" fill="#b8b8ff"/><rect x="163" width="1" height="22" fill="#d4d4ff"/></svg>
<div class="t r n" style="left:158px;width:200px;top:304px">23.8%</div>
<div class="t r n" style="left:530px;width:200px;top:304px">389 kB/s</div>
<div class="t r n" style="left:650px;width:200px;top:304px">0 KB</div>
<div class="t r n" style="left:765px;width:200px;top:304px">58,592 KB</div>
<div class="t r " style="left:849px;width:200px;top:304px"><span class="z" style="width:2em">远程</span></div>
<div class="t r n" style="left:980px;width:200px;top:304px">136 kB/s</div>
<div class="t r n" style="left:1079px;width:200px;top:304px">0:05:13</div>
<div class="t n" style="left:1293px;top:304px">XunLei 0100</div>
<div class="t n" style="left:1472px;top:304px;letter-spacing:-.8px">_ci_</div>
<svg class="i" style="left:7.5px;top:328.7px" width="16" height="16" ><use href="#s-faceo"/></svg><div class="t n" style="left:28px;top:327px">113.64.125.15:8299</div>
<svg class="bar" style="top:325px" width="166" height="22" viewBox="0 0 166 22" preserveAspectRatio="none"><rect width="166" height="22" fill="#e8e8e8"/><rect x="0" width="32.5" height="22" fill="#0000ff"/><rect x="32.5" width="1.5" height="22" fill="#ffffff"/><rect x="35.1" width="1.3" height="22" fill="#0000ff"/><rect x="36.4" width="1.6" height="22" fill="#ffffff"/><rect x="40" width="5" height="22" fill="#0000ff"/></svg>
<div class="t r n" style="left:158px;width:200px;top:327px">23.3%</div>
<div class="t r n" style="left:530px;width:200px;top:327px">105 kB/s</div>
<div class="t r n" style="left:650px;width:200px;top:327px">0 KB</div>
<div class="t r n" style="left:765px;width:200px;top:327px">182,448 KB</div>
<div class="t r " style="left:849px;width:200px;top:327px"><span class="z" style="width:2em">远程</span></div>
<div class="t r n" style="left:980px;width:200px;top:327px">546 kB/s</div>
<div class="t r n" style="left:1079px;width:200px;top:327px">0:13:31</div>
<div class="t n" style="left:1293px;top:327px">XunLei 0100</div>
<div class="t n" style="left:1472px;top:327px;letter-spacing:-.8px">_ci_</div>
<svg class="i" style="left:7.5px;top:351.7px" width="16" height="16" ><use href="#s-faceo"/></svg><div class="t n" style="left:28px;top:350px">114.88.231.250:10259</div>
<svg class="bar" style="top:348px" width="166" height="22" viewBox="0 0 166 22" preserveAspectRatio="none"><rect width="166" height="22" fill="#d4d4ff"/><rect x="0" width="9.7" height="22" fill="#0000ff"/><rect x="9.7" width="1.3" height="22" fill="#4848ff"/><rect x="11" width="2" height="22" fill="#2a2aff"/><rect x="13" width="1.5" height="22" fill="#7878ff"/><rect x="14.5" width="2.0" height="22" fill="#b8b8ff"/><rect x="16.5" width="1.0" height="22" fill="#7878ff"/><rect x="17.5" width="4.5" height="22" fill="#0000ff"/><rect x="22" width="1" height="22" fill="#7878ff"/><rect x="23" width="2" height="22" fill="#b8b8ff"/><rect x="25" width="2" height="22" fill="#7878ff"/><rect x="27" width="3" height="22" fill="#b8b8ff"/><rect x="30" width="1" height="22" fill="#7878ff"/><rect x="31" width="4.5" height="22" fill="#0000ff"/><rect x="35.5" width="1.0" height="22" fill="#7878ff"/><rect x="36.5" width="3.5" height="22" fill="#b8b8ff"/><rect x="40" width="0.9" height="22" fill="#ccccff"/><rect x="40.9" width="1.7" height="22" fill="#ccccff"/><rect x="42.6" width="1.2" height="22" fill="#ccccff"/><rect x="43.8" width="1.6" height="22" fill="#e6e6ff"/><rect x="46.8" width="0.9" height="22" fill="#b0b0ff"/><rect x="47.7" width="1.4" height="22" fill="#e6e6ff"/><rect x="49.1" width="1.9" height="22" fill="#e0e0ff"/><rect x="51.0" width="1.7" height="22" fill="#e0e0ff"/><rect x="52.8" width="0.7" height="22" fill="#9c9cff"/><rect x="53.5" width="1.3" height="22" fill="#e0e0ff"/><rect x="54.8" width="2.3" height="22" fill="#9c9cff"/><rect x="57.1" width="2.6" height="22" fill="#9c9cff"/><rect x="59.7" width="0.9" height="22" fill="#c0c0ff"/><rect x="60.6" width="1.8" height="22" fill="#b0b0ff"/><rect x="62.4" width="1.0" height="22" fill="#e6e6ff"/><rect x="63.4" width="1.6" height="22" fill="#b0b0ff"/><rect x="65.1" width="1.6" height="22" fill="#e6e6ff"/><rect x="66.6" width="1.2" height="22" fill="#c0c0ff"/><rect x="67.9" width="2.3" height="22" fill="#b0b0ff"/><rect x="70.1" width="0.9" height="22" fill="#dadaff"/><rect x="71.0" width="0.9" height="22" fill="#c0c0ff"/><rect x="73.5" width="1.0" height="22" fill="#b0b0ff"/><rect x="74.5" width="1.6" height="22" fill="#9c9cff"/><rect x="76.1" width="2.3" height="22" fill="#dadaff"/><rect x="79.5" width="2.5" height="22" fill="#e0e0ff"/><rect x="82.0" width="1.6" height="22" fill="#dadaff"/><rect x="83.6" width="0.7" height="22" fill="#dadaff"/><rect x="84.4" width="0.7" height="22" fill="#b0b0ff"/><rect x="85.1" width="2.5" height="22" fill="#b0b0ff"/><rect x="87.6" width="1.7" height="22" fill="#9c9cff"/><rect x="89.3" width="1.6" height="22" fill="#dadaff"/><rect x="90.9" width="0.9" height="22" fill="#c0c0ff"/><rect x="91.8" width="2.6" height="22" fill="#b0b0ff"/><rect x="96.0" width="2.6" height="22" fill="#e0e0ff"/><rect x="98.6" width="2.2" height="22" fill="#b0b0ff"/><rect x="100.8" width="2.4" height="22" fill="#e0e0ff"/><rect x="103.2" width="1.1" height="22" fill="#b0b0ff"/><rect x="105.5" width="1.4" height="22" fill="#9c9cff"/><rect x="109.0" width="1.0" height="22" fill="#e0e0ff"/><rect x="110.0" width="1.4" height="22" fill="#dadaff"/><rect x="114.4" width="1.9" height="22" fill="#dadaff"/><rect x="116.3" width="1.6" height="22" fill="#b0b0ff"/><rect x="117.9" width="2.2" height="22" fill="#c0c0ff"/><rect x="120.1" width="2.0" height="22" fill="#b0b0ff"/><rect x="122.1" width="1.6" height="22" fill="#dadaff"/><rect x="123.8" width="0.8" height="22" fill="#ccccff"/><rect x="124.6" width="1.4" height="22" fill="#e0e0ff"/><rect x="126.0" width="1.5" height="22" fill="#e6e6ff"/><rect x="127.5" width="2.1" height="22" fill="#ccccff"/><rect x="134.4" width="2.6" height="22" fill="#e6e6ff"/><rect x="136.9" width="1.8" height="22" fill="#dadaff"/><rect x="140.3" width="1.3" height="22" fill="#b0b0ff"/><rect x="141.6" width="0.8" height="22" fill="#ccccff"/><rect x="142.4" width="1.7" height="22" fill="#e6e6ff"/><rect x="145.0" width="0.9" height="22" fill="#ccccff"/><rect x="145.9" width="2.5" height="22" fill="#e6e6ff"/><rect x="148.4" width="2.0" height="22" fill="#dadaff"/><rect x="150.4" width="2.4" height="22" fill="#dadaff"/><rect x="154.3" width="2.1" height="22" fill="#c0c0ff"/><rect x="156.4" width="2.5" height="22" fill="#ccccff"/><rect x="158.9" width="1.8" height="22" fill="#9c9cff"/><rect x="160.8" width="2.6" height="22" fill="#c0c0ff"/><rect x="165.8" width="0.2" height="22" fill="#dadaff"/><rect x="62" width="1.5" height="22" fill="#8888ff"/><rect x="108" width="1" height="22" fill="#a0a0ff"/></svg>
<div class="t r n" style="left:158px;width:200px;top:350px">22.6%</div>
<div class="t r n" style="left:530px;width:200px;top:350px">32 kB/s</div>
<div class="t r n" style="left:650px;width:200px;top:350px">0 KB</div>
<div class="t r n" style="left:765px;width:200px;top:350px">107,408 KB</div>
<div class="t r " style="left:849px;width:200px;top:350px"><span class="z" style="width:2em">远程</span></div>
<div class="t r n" style="left:980px;width:200px;top:350px">682 kB/s</div>
<div class="t r n" style="left:1079px;width:200px;top:350px">0:13:44</div>
<div class="t n" style="left:1293px;top:350px">XunLei 0012</div>
<div class="t n" style="left:1472px;top:350px;letter-spacing:-.8px">_ci_</div>
<svg class="i" style="left:7.5px;top:374.7px" width="16" height="16" ><use href="#s-faceo"/></svg><div class="t n" style="left:28px;top:373px">222.168.41.130:15000</div>
<svg class="bar" style="top:371px" width="166" height="22" viewBox="0 0 166 22" preserveAspectRatio="none"><rect width="166" height="22" fill="#e8e8e8"/></svg>
<div class="t r n" style="left:158px;width:200px;top:373px">0.0%</div>
<div class="t r n" style="left:530px;width:200px;top:373px">6 kB/s</div>
<div class="t r n" style="left:650px;width:200px;top:373px">0 KB</div>
<div class="t r n" style="left:765px;width:200px;top:373px">384 KB</div>
<div class="t r " style="left:849px;width:200px;top:373px"><span class="z" style="width:2em">远程</span></div>
<div class="t r n" style="left:1079px;width:200px;top:373px">0:01:05</div>
<div class="t n" style="left:1293px;top:373px">XunLei 0012</div>
<div class="t n" style="left:1472px;top:373px;letter-spacing:-.8px">_ci_</div>
<svg class="i" style="left:7.5px;top:397.7px" width="16" height="16" ><use href="#s-faceo"/></svg><div class="t n" style="left:28px;top:396px">116.21.123.35:15000</div>
<svg class="bar" style="top:394px" width="166" height="22" viewBox="0 0 166 22" preserveAspectRatio="none"><rect width="166" height="22" fill="#e8e8e8"/></svg>
<div class="t r n" style="left:158px;width:200px;top:396px">0.0%</div>
<div class="t r n" style="left:530px;width:200px;top:396px">166 kB/s</div>
<div class="t r n" style="left:650px;width:200px;top:396px">0 KB</div>
<div class="t r n" style="left:765px;width:200px;top:396px">89,659 KB</div>
<div class="t r " style="left:849px;width:200px;top:396px"><span class="z" style="width:2em">远程</span></div>
<div class="t r n" style="left:1079px;width:200px;top:396px">0:05:14</div>
<div class="t n" style="left:1293px;top:396px">XunLei 0012</div>
<div class="t n" style="left:1472px;top:396px;letter-spacing:-.8px">_ci_</div>
<svg class="i" style="left:7.5px;top:420.7px" width="16" height="16" ><use href="#s-faceo"/></svg><div class="t n" style="left:28px;top:419px">123.152.225.54:15000</div>
<svg class="bar" style="top:417px" width="166" height="22" viewBox="0 0 166 22" preserveAspectRatio="none"><rect width="166" height="22" fill="#e8e8e8"/></svg>
<div class="t r n" style="left:158px;width:200px;top:419px">0.0%</div>
<div class="t r n" style="left:530px;width:200px;top:419px">624 kB/s</div>
<div class="t r n" style="left:650px;width:200px;top:419px">0 KB</div>
<div class="t r n" style="left:765px;width:200px;top:419px">67,199 KB</div>
<div class="t r " style="left:849px;width:200px;top:419px"><span class="z" style="width:2em">远程</span></div>
<div class="t r n" style="left:1079px;width:200px;top:419px">0:06:36</div>
<div class="t n" style="left:1293px;top:419px">XunLei 0012</div>
<div class="t n" style="left:1472px;top:419px;letter-spacing:-.8px">_ci_</div>
<svg class="i" style="left:7.5px;top:443.7px" width="16" height="16" ><use href="#s-faceo"/></svg><div class="t n" style="left:28px;top:442px">180.171.75.135:44573</div>
<svg class="bar" style="top:440px" width="166" height="22" viewBox="0 0 166 22" preserveAspectRatio="none"><rect width="166" height="22" fill="#e8e8e8"/></svg>
<div class="t r n" style="left:158px;width:200px;top:442px">0.0%</div>
<div class="t r n" style="left:530px;width:200px;top:442px">22 kB/s</div>
<div class="t r n" style="left:650px;width:200px;top:442px">0 KB</div>
<div class="t r n" style="left:765px;width:200px;top:442px">1,136 KB</div>
<div class="t r " style="left:849px;width:200px;top:442px"><span class="z" style="width:2em">远程</span></div>
<div class="t r n" style="left:1079px;width:200px;top:442px">0:01:22</div>
<div class="t n" style="left:1293px;top:442px">uTorrent 3.0.0 (27703)</div>
<div class="t n" style="left:1472px;top:442px;letter-spacing:-.8px">_ci_</div>
<svg class="i" style="left:7.5px;top:466.7px" width="16" height="16" ><use href="#s-faceo"/></svg><div class="t n" style="left:28px;top:465px">123.103.9.7:15000</div>
<svg class="bar" style="top:463px" width="166" height="22" viewBox="0 0 166 22" preserveAspectRatio="none"><rect width="166" height="22" fill="#e8e8e8"/></svg>
<div class="t r n" style="left:158px;width:200px;top:465px">0.0%</div>
<div class="t r n" style="left:530px;width:200px;top:465px">4 kB/s</div>
<div class="t r n" style="left:650px;width:200px;top:465px">0 KB</div>
<div class="t r n" style="left:765px;width:200px;top:465px">192 KB</div>
<div class="t r " style="left:849px;width:200px;top:465px"><span class="z" style="width:2em">远程</span></div>
<div class="t r n" style="left:1079px;width:200px;top:465px">0:01:38</div>
<div class="t n" style="left:1293px;top:465px">XunLei 0012</div>
<div class="t n" style="left:1472px;top:465px;letter-spacing:-.8px">_ci_</div>
<svg class="i" style="left:7.5px;top:489.7px" width="16" height="16" ><use href="#s-faceo"/></svg><div class="t n" style="left:28px;top:488px">222.44.174.6:15000</div>
<svg class="bar" style="top:486px" width="166" height="22" viewBox="0 0 166 22" preserveAspectRatio="none"><rect width="166" height="22" fill="#e8e8e8"/></svg>
<div class="t r n" style="left:158px;width:200px;top:488px">0.0%</div>
<div class="t r n" style="left:530px;width:200px;top:488px">3 kB/s</div>
<div class="t r n" style="left:650px;width:200px;top:488px">0 KB</div>
<div class="t r n" style="left:765px;width:200px;top:488px">98 KB</div>
<div class="t r " style="left:849px;width:200px;top:488px"><span class="z" style="width:2em">远程</span></div>
<div class="t r n" style="left:1079px;width:200px;top:488px">0:00:43</div>
<div class="t n" style="left:1293px;top:488px">XunLei 0012</div>
<div class="t n" style="left:1472px;top:488px;letter-spacing:-.8px">_ci_</div>
<div id="sb"><div class="thumb"></div><svg class="i" style="left:3.500px;top:7px" width="12" height="8"><path d="M1 7l5-5 5 5" stroke="#606060" stroke-width="1.800" fill="none"/></svg><svg class="i" style="left:3.500px;top:480.500px" width="12" height="8"><path d="M1 1l5 5 5-5" stroke="#606060" stroke-width="1.800" fill="none"/></svg></div>
</div>
<div id="ime">
<div class="t" style="left:17px;top:7px;font-size:25px;font-weight:bold;line-height:32px;height:32px;color:#d6d6dc"><span class="z" style="width:1em">中</span></div>
<svg class="i" style="left:60px;top:17px" width="20" height="12"><circle cx="6" cy="6" r="2.600" fill="none" stroke="#d6d6dc" stroke-width="1.300"/><path d="M14.500 2.500l3 0-2.500 6.500-2 0z" fill="#d6d6dc"/></svg>
<svg class="i" style="left:93px;top:10px" width="26" height="28"><path d="M9.500 .5A12 12 0 1 1 1 18A10 10 0 0 0 9.500 .5z" fill="#d8d8de"/></svg>
<svg class="i" style="left:130px;top:2px" width="44" height="44"><g transform="rotate(-16 22 22)"><rect x="5" y="5" width="33" height="33" rx="5" fill="#101012"/><text x="21.500" y="34" text-anchor="middle" font-family="Liberation Sans, sans-serif" font-weight="bold" font-style="italic" font-size="38" fill="#3c3d43" transform="translate(0 1) scale(1.250 .85)" style="transform-origin:21.500px 22px">S</text></g></svg>
</div>
<div class="ssep" style="left:1427px"></div>
<div class="ssep" style="left:1454px"></div>
<div class="ssep" style="left:1528px"></div>
<div class="ssep" style="left:1554px"></div>
<div class="ssep" style="left:1728px"></div>
<div class="ssep" style="left:1754px"></div>
<svg class="i" style="left:1432px;top:1008px" width="18" height="18" ><use href="#s-bc"/></svg><div class="t" style="left:1458px;top:1008px;font-size:15.5px;letter-spacing:.3px">hnoycy</div>
<svg class="i" style="left:1533px;top:1009px" width="17" height="17" ><use href="#s-gball"/></svg><svg class="i" style="left:1733px;top:1009px" width="17" height="17" ><use href="#s-gball"/></svg><div class="t" style="left:1559px;top:1008px;font-size:15px;letter-spacing:.05px">DHT<span class="z" style="width:5em">已连接节点</span>: 1223</div>
<div class="t" style="left:1759px;top:1008px;font-size:15px;letter-spacing:.3px"><span class="z" style="width:4em">端口开放</span>:&nbsp;&nbsp; 27209</div>
</body></html>
